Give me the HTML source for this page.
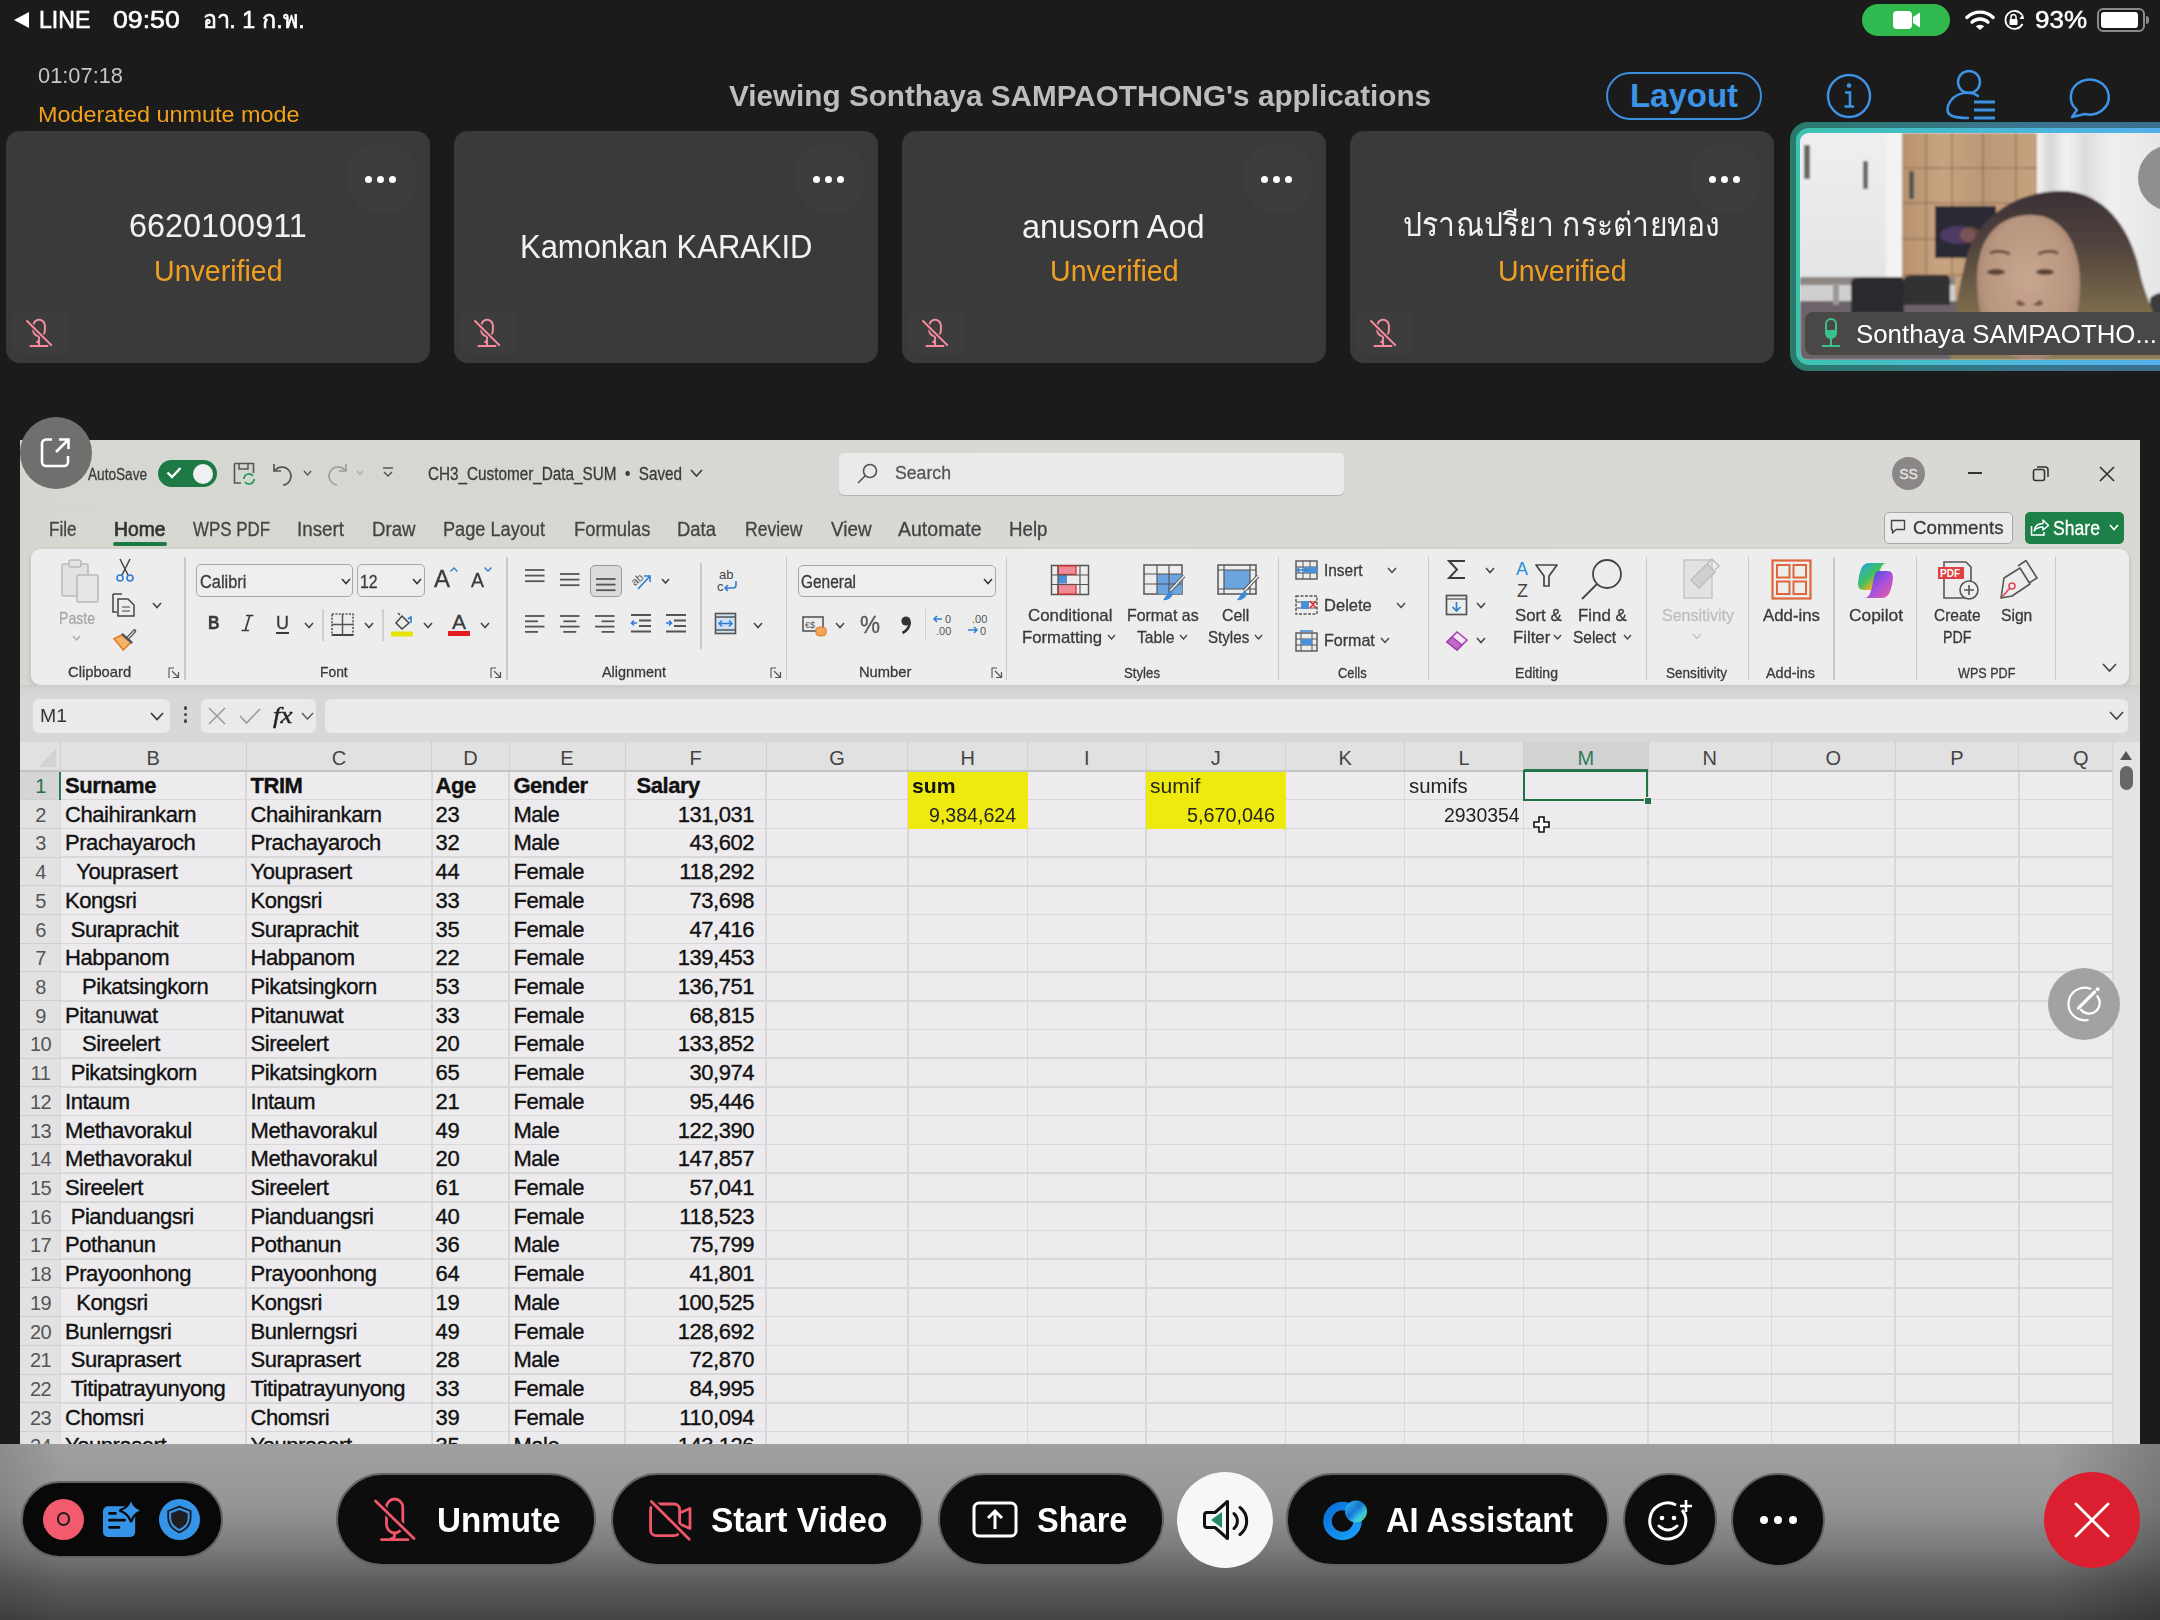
<!DOCTYPE html>
<html><head><meta charset="utf-8">
<style>
html,body{margin:0;padding:0;}
body{width:2160px;height:1620px;overflow:hidden;position:relative;background:#1b1b1b;font-family:"Liberation Sans",sans-serif;}
.abs{position:absolute;}
.t{white-space:nowrap;}
.card{background:#3a3a3a;border-radius:14px;}
.xs .t{-webkit-text-stroke-width:0.3px;}
</style></head><body>


<div class="abs" style="left:14px;top:12px;width:0;height:0;border-top:8px solid transparent;border-bottom:8px solid transparent;border-right:15px solid #fff;"></div>
<div class="abs t" style="left:38.5px;top:-4.4px;font-size:24px;line-height:48px;color:#fff;font-weight:normal;font-style:normal;transform:scaleX(0.9615);transform-origin:0 0;-webkit-text-stroke-width:0.6px;">LINE</div><div class="abs t" style="left:113.3px;top:-4.4px;font-size:24px;line-height:48px;color:#fff;font-weight:normal;font-style:normal;transform:scaleX(1.1106);transform-origin:0 0;-webkit-text-stroke-width:0.6px;">09:50</div><div class="abs t" style="left:202.8px;top:-4px;font-size:24px;line-height:48px;color:#fff;transform:scaleX(0.972);transform-origin:0 0;-webkit-text-stroke-width:0.6px;">อา. 1 ก.พ.</div>
<div class="abs" style="left:1862px;top:4px;width:88px;height:32px;border-radius:16px;background:#30b94f;"></div>
<div class="abs" style="left:1893px;top:11px;width:19px;height:18px;border-radius:4px;background:#fff;"></div>
<svg class="abs" style="left:1912px;top:12px" width="9" height="16"><path d="M1 5 L8 0.5 L8 15.5 L1 11 Z" fill="#fff"/></svg>
<svg class="abs" style="left:1965px;top:9px" width="30" height="22.5" viewBox="0 0 32 24">
 <path d="M2 9 A20 20 0 0 1 30 9" stroke="#fff" stroke-width="3.6" fill="none" stroke-linecap="round"/>
 <path d="M7.5 14 A12.5 12.5 0 0 1 24.5 14" stroke="#fff" stroke-width="3.6" fill="none" stroke-linecap="round"/>
 <path d="M16 22.5 L11.5 18.5 A6.5 6.5 0 0 1 20.5 18.5 Z" fill="#fff"/>
</svg>
<svg class="abs" style="left:2003px;top:9px" width="24" height="22" viewBox="0 0 24 22">
 <path d="M19 6 A9 9 0 1 0 19.5 15" stroke="#fff" stroke-width="1.8" fill="none"/>
 <path d="M16.5 10 L21 10 L20 5 Z" fill="#fff"/>
 <rect x="6.5" y="10" width="8" height="6" rx="1" fill="#fff"/>
 <path d="M8 10 V8 A2.5 2.5 0 0 1 13 8 V10" stroke="#fff" stroke-width="1.5" fill="none"/>
</svg>
<div class="abs t" style="left:2035.0px;top:-3.2px;font-size:23px;line-height:46px;color:#fff;font-weight:normal;font-style:normal;transform:scaleX(1.1296);transform-origin:0 0;-webkit-text-stroke-width:0.5px;">93%</div>
<div class="abs" style="left:2097px;top:8px;width:44px;height:20px;border:2px solid #8a8a8a;border-radius:6px;"></div>
<div class="abs" style="left:2101px;top:12px;width:37px;height:16px;border-radius:3px;background:#fff;"></div>
<div class="abs" style="left:2146px;top:16px;width:3px;height:8px;border-radius:0 3px 3px 0;background:#8a8a8a;"></div>


<div class="abs t" style="left:38.0px;top:54.4px;font-size:22px;line-height:44px;color:#c6c6c6;font-weight:normal;font-style:normal;transform:scaleX(0.9925);transform-origin:0 0;">01:07:18</div><div class="abs t" style="left:38.0px;top:93.2px;font-size:22px;line-height:44px;color:#f2a11d;font-weight:normal;font-style:normal;transform:scaleX(1.0642);transform-origin:0 0;">Moderated unmute mode</div><div class="abs t" style="left:728.9px;top:66.4px;font-size:30px;line-height:60px;color:#bdbdbd;font-weight:bold;font-style:normal;transform:scaleX(0.9896);transform-origin:0 0;">Viewing Sonthaya SAMPAOTHONG's applications</div>
<div class="abs" style="left:1606px;top:72px;width:152px;height:44px;border:2px solid #3b8fdf;border-radius:24px;"></div>
<div class="abs t" style="left:1606px;top:74px;width:156px;text-align:center;font-size:33px;font-weight:bold;color:#3d93e6;line-height:44px;">Layout</div>
<svg class="abs" style="left:1826px;top:73px" width="46" height="46" viewBox="0 0 46 46">
 <circle cx="23" cy="23" r="21" stroke="#3d93e6" stroke-width="2.4" fill="none"/>
 <circle cx="23" cy="12.5" r="2.3" fill="#3d93e6"/>
 <path d="M19 19.5 H24 V33 M18.5 33.5 H28" stroke="#3d93e6" stroke-width="2.6" fill="none"/>
</svg>
<svg class="abs" style="left:1944px;top:68px" width="56" height="54" viewBox="0 0 56 54">
 <circle cx="25" cy="14" r="11" stroke="#3d93e6" stroke-width="2.5" fill="none"/>
 <path d="M34 28 C28 23 10 22 4 38 C1 48 10 50 24 50" stroke="#3d93e6" stroke-width="2.5" fill="none" stroke-linecap="round"/>
 <path d="M30 34 H51 M30 42 H51 M30 50 H51" stroke="#3d93e6" stroke-width="2.8" fill="none"/>
</svg>
<svg class="abs" style="left:2068px;top:74px" width="46" height="46" viewBox="0 0 46 46">
 <path d="M9 36 A19 17.5 0 1 1 17 40 L4 43 Z" stroke="#3d93e6" stroke-width="2.5" fill="none" stroke-linejoin="round"/>
</svg>

<div class="abs card" style="left:6px;top:131px;width:424px;height:232px;"></div>
<div class="abs" style="left:346px;top:142px;width:72px;height:72px;border-radius:36px;background:#3d3d3d;"></div>
<div class="abs" style="left:365.0px;top:175.5px;width:7px;height:7px;border-radius:4px;background:#fff;"></div>
<div class="abs" style="left:377.2px;top:175.5px;width:7px;height:7px;border-radius:4px;background:#fff;"></div>
<div class="abs" style="left:389.4px;top:175.5px;width:7px;height:7px;border-radius:4px;background:#fff;"></div>
<div class="abs" style="left:13px;top:311px;width:56px;height:43px;border-radius:8px;background:#3d3d3d;"></div>
<svg class="abs" style="left:25px;top:317px" width="36" height="34" viewBox="0 0 36 34">
 <rect x="8.3" y="2.8" width="11.6" height="16.4" rx="5.8" stroke="#f48c9c" stroke-width="2" fill="none"/>
 <path d="M14.1 19.2 V22 C14.1 24 12.5 25 11.5 25.5 M14.1 23.5 V28.5" stroke="#f48c9c" stroke-width="2" fill="none"/>
 <path d="M5.5 29 H22.5" stroke="#f48c9c" stroke-width="2.2" stroke-linecap="round"/>
 <path d="M2 4 L26.2 28" stroke="#3a3a3a" stroke-width="4.5"/>
 <path d="M2 4 L26.2 28" stroke="#f48c9c" stroke-width="2" stroke-linecap="round"/>
</svg>
<div class="abs t" style="left:128.8px;top:192.6px;font-size:33px;line-height:66px;color:#f2f2f2;font-weight:normal;font-style:normal;transform:scaleX(0.9818);transform-origin:0 0;">6620100911</div>
<div class="abs t" style="left:153.7px;top:241.0px;font-size:30px;line-height:60px;color:#f0a020;font-weight:normal;font-style:normal;transform:scaleX(0.9521);transform-origin:0 0;">Unverified</div>
<div class="abs card" style="left:454px;top:131px;width:424px;height:232px;"></div>
<div class="abs" style="left:794px;top:142px;width:72px;height:72px;border-radius:36px;background:#3d3d3d;"></div>
<div class="abs" style="left:813.0px;top:175.5px;width:7px;height:7px;border-radius:4px;background:#fff;"></div>
<div class="abs" style="left:825.2px;top:175.5px;width:7px;height:7px;border-radius:4px;background:#fff;"></div>
<div class="abs" style="left:837.4px;top:175.5px;width:7px;height:7px;border-radius:4px;background:#fff;"></div>
<div class="abs" style="left:461px;top:311px;width:56px;height:43px;border-radius:8px;background:#3d3d3d;"></div>
<svg class="abs" style="left:473px;top:317px" width="36" height="34" viewBox="0 0 36 34">
 <rect x="8.3" y="2.8" width="11.6" height="16.4" rx="5.8" stroke="#f48c9c" stroke-width="2" fill="none"/>
 <path d="M14.1 19.2 V22 C14.1 24 12.5 25 11.5 25.5 M14.1 23.5 V28.5" stroke="#f48c9c" stroke-width="2" fill="none"/>
 <path d="M5.5 29 H22.5" stroke="#f48c9c" stroke-width="2.2" stroke-linecap="round"/>
 <path d="M2 4 L26.2 28" stroke="#3a3a3a" stroke-width="4.5"/>
 <path d="M2 4 L26.2 28" stroke="#f48c9c" stroke-width="2" stroke-linecap="round"/>
</svg>
<div class="abs t" style="left:520.0px;top:214.0px;font-size:33px;line-height:66px;color:#f2f2f2;font-weight:normal;font-style:normal;transform:scaleX(0.9380);transform-origin:0 0;">Kamonkan KARAKID</div>
<div class="abs card" style="left:902px;top:131px;width:424px;height:232px;"></div>
<div class="abs" style="left:1242px;top:142px;width:72px;height:72px;border-radius:36px;background:#3d3d3d;"></div>
<div class="abs" style="left:1261.0px;top:175.5px;width:7px;height:7px;border-radius:4px;background:#fff;"></div>
<div class="abs" style="left:1273.2px;top:175.5px;width:7px;height:7px;border-radius:4px;background:#fff;"></div>
<div class="abs" style="left:1285.4px;top:175.5px;width:7px;height:7px;border-radius:4px;background:#fff;"></div>
<div class="abs" style="left:909px;top:311px;width:56px;height:43px;border-radius:8px;background:#3d3d3d;"></div>
<svg class="abs" style="left:921px;top:317px" width="36" height="34" viewBox="0 0 36 34">
 <rect x="8.3" y="2.8" width="11.6" height="16.4" rx="5.8" stroke="#f48c9c" stroke-width="2" fill="none"/>
 <path d="M14.1 19.2 V22 C14.1 24 12.5 25 11.5 25.5 M14.1 23.5 V28.5" stroke="#f48c9c" stroke-width="2" fill="none"/>
 <path d="M5.5 29 H22.5" stroke="#f48c9c" stroke-width="2.2" stroke-linecap="round"/>
 <path d="M2 4 L26.2 28" stroke="#3a3a3a" stroke-width="4.5"/>
 <path d="M2 4 L26.2 28" stroke="#f48c9c" stroke-width="2" stroke-linecap="round"/>
</svg>
<div class="abs t" style="left:1022.0px;top:193.5px;font-size:33px;line-height:66px;color:#f2f2f2;font-weight:normal;font-style:normal;transform:scaleX(0.9858);transform-origin:0 0;">anusorn Aod</div>
<div class="abs t" style="left:1049.7px;top:241.0px;font-size:30px;line-height:60px;color:#f0a020;font-weight:normal;font-style:normal;transform:scaleX(0.9521);transform-origin:0 0;">Unverified</div>
<div class="abs card" style="left:1350px;top:131px;width:424px;height:232px;"></div>
<div class="abs" style="left:1690px;top:142px;width:72px;height:72px;border-radius:36px;background:#3d3d3d;"></div>
<div class="abs" style="left:1709.0px;top:175.5px;width:7px;height:7px;border-radius:4px;background:#fff;"></div>
<div class="abs" style="left:1721.2px;top:175.5px;width:7px;height:7px;border-radius:4px;background:#fff;"></div>
<div class="abs" style="left:1733.4px;top:175.5px;width:7px;height:7px;border-radius:4px;background:#fff;"></div>
<div class="abs" style="left:1357px;top:311px;width:56px;height:43px;border-radius:8px;background:#3d3d3d;"></div>
<svg class="abs" style="left:1369px;top:317px" width="36" height="34" viewBox="0 0 36 34">
 <rect x="8.3" y="2.8" width="11.6" height="16.4" rx="5.8" stroke="#f48c9c" stroke-width="2" fill="none"/>
 <path d="M14.1 19.2 V22 C14.1 24 12.5 25 11.5 25.5 M14.1 23.5 V28.5" stroke="#f48c9c" stroke-width="2" fill="none"/>
 <path d="M5.5 29 H22.5" stroke="#f48c9c" stroke-width="2.2" stroke-linecap="round"/>
 <path d="M2 4 L26.2 28" stroke="#3a3a3a" stroke-width="4.5"/>
 <path d="M2 4 L26.2 28" stroke="#f48c9c" stroke-width="2" stroke-linecap="round"/>
</svg>
<div class="abs t" style="left:1403px;top:192px;font-size:33px;line-height:66px;color:#f2f2f2;transform:scaleX(0.91);transform-origin:0 0;">ปราณปรียา กระต่ายทอง</div>
<div class="abs t" style="left:1497.7px;top:241.0px;font-size:30px;line-height:60px;color:#f0a020;font-weight:normal;font-style:normal;transform:scaleX(0.9521);transform-origin:0 0;">Unverified</div>

<div class="abs" style="left:1790px;top:122px;width:400px;height:249px;border-radius:18px;background:linear-gradient(90deg,#2a7a6c,#3a7590 60%,#3a6f90);"></div>
<div class="abs" style="left:1796px;top:128px;width:400px;height:237px;border-radius:13px;background:linear-gradient(90deg,#3cc4b0,#4ab8d8 50%,#55aef0);"></div>
<div class="abs" style="left:1800px;top:133px;width:400px;height:227px;border-radius:9px 0 0 9px;overflow:hidden;background:#e9e9eb;">
<svg class="abs" style="left:0;top:0" width="400" height="227" viewBox="0 0 400 227">
 <defs>
  <filter id="vb" x="-5%" y="-5%" width="110%" height="110%"><feGaussianBlur stdDeviation="1.3"/></filter>
  <linearGradient id="win" x1="0" y1="0" x2="0" y2="1"><stop offset="0" stop-color="#efeff1"/><stop offset="0.6" stop-color="#e4e5e7"/><stop offset="1" stop-color="#d4d5d7"/></linearGradient>
  <linearGradient id="wood" x1="0" y1="0" x2="1" y2="0"><stop offset="0" stop-color="#b8926e"/><stop offset="0.3" stop-color="#c9a480"/><stop offset="0.6" stop-color="#bd9876"/><stop offset="1" stop-color="#c6a27e"/></linearGradient>
  <linearGradient id="cur" x1="0" y1="0" x2="1" y2="0"><stop offset="0" stop-color="#f4f4f4"/><stop offset="0.08" stop-color="#d6d6d6"/><stop offset="0.18" stop-color="#f2f2f2"/><stop offset="0.3" stop-color="#dcdcdc"/><stop offset="0.45" stop-color="#efefef"/><stop offset="0.75" stop-color="#e6e6e6"/><stop offset="0.88" stop-color="#f2f2f2"/><stop offset="1" stop-color="#d8d8d8"/></linearGradient>
  <linearGradient id="hair" x1="0" y1="0" x2="0" y2="1"><stop offset="0" stop-color="#3a3036"/><stop offset="0.35" stop-color="#54463e"/><stop offset="0.7" stop-color="#7a6a4a"/><stop offset="1" stop-color="#8c7c56"/></linearGradient>
  <radialGradient id="skin" cx="0.5" cy="0.45" r="0.6"><stop offset="0" stop-color="#c8a690"/><stop offset="0.7" stop-color="#b89680"/><stop offset="1" stop-color="#9c7c68"/></radialGradient>
 </defs>
 <g filter="url(#vb)">
  <rect x="0" y="0" width="102" height="227" fill="url(#win)"/>
  <rect x="86" y="0" width="16" height="227" fill="#f3f3f3"/>
  <rect x="102" y="0" width="136" height="190" fill="url(#wood)"/>
  <path d="M102 35 H238 M102 70 H238 M102 106 H238 M102 142 H238 M126 0 V190 M152 0 V190 M183 0 V190 M216 0 V190" stroke="#7a5e48" stroke-width="1.6" opacity="0.55"/>
  <rect x="237" y="0" width="163" height="227" fill="url(#cur)"/>
  <rect x="135" y="73" width="61" height="52" fill="#2a2a34"/>
  <ellipse cx="158" cy="102" rx="18" ry="9" fill="#7a50a0" opacity="0.45"/>
  <ellipse cx="170" cy="102" rx="10" ry="8" fill="#b07040" opacity="0.45"/>
  <rect x="4" y="12" width="6" height="34" fill="#666"/>
  <rect x="63" y="28" width="5" height="28" fill="#666"/>
  <rect x="109" y="38" width="5" height="28" fill="#555"/>
  <rect x="0" y="144" width="155" height="8" fill="#8c8682"/>
  <rect x="0" y="152" width="155" height="20" fill="#cfcfd0"/>
  <rect x="0" y="168" width="160" height="59" fill="#6c646a"/>
  <rect x="33" y="150" width="6" height="22" fill="#9a9694"/>
  <path d="M51 150 Q51 144 60 144 H100 Q104 144 104 150 V180 H51 Z" fill="#2c2c2e"/>
  <path d="M104 148 Q104 142 112 142 H146 Q150 142 150 148 V172 H104 Z" fill="#303032"/>
  <rect x="311" y="159" width="24" height="6" fill="#8a8480"/>
  <path d="M350 165 Q358 158 372 160 V227 H350 Z" fill="#3a3a3c"/>
  <path d="M262 58 C300 58 330 90 340 140 C345 165 360 190 370 227 H150 C152 190 158 160 165 130 C175 85 215 58 262 58 Z" fill="url(#hair)"/>
  <path d="M228 82 C262 80 280 110 280 150 C280 200 262 227 230 227 C198 227 178 200 177 150 C176 112 192 84 228 82 Z" fill="url(#skin)"/>
  <path d="M190 120 Q200 116 210 121 M238 121 Q248 116 258 120" stroke="#6a5040" stroke-width="3" fill="none"/>
  <ellipse cx="196" cy="139" rx="9" ry="3" fill="#5a4438"/>
  <ellipse cx="245" cy="139" rx="9" ry="3" fill="#5a4438"/>
  <ellipse cx="221" cy="170" rx="5" ry="3" fill="#7a5a4a"/><ellipse cx="238" cy="170" rx="5" ry="3" fill="#7a5a4a"/><ellipse cx="229.5" cy="165" rx="10" ry="6" fill="#c4a08c"/>
 </g>
</svg>
</div>
<div class="abs" style="left:1805px;top:312px;width:360px;height:42.5px;border-radius:8px 0 0 8px;background:#4a4846;"></div>
<svg class="abs" style="left:1820px;top:318px" width="22" height="30" viewBox="0 0 22 30">
 <rect x="6" y="1" width="10" height="19" rx="5" stroke="#3cc08e" stroke-width="2" fill="none"/>
 <path d="M6 12 H16 V15 A5 5 0 0 1 6 15 Z" fill="#3cc08e"/>
 <path d="M11 20 V27 M2 28 H20" stroke="#3cc08e" stroke-width="2"/>
</svg>
<div class="abs t" style="left:1856.0px;top:307.5px;font-size:26px;line-height:52px;color:#fff;font-weight:normal;font-style:normal;transform:scaleX(0.9935);transform-origin:0 0;">Sonthaya SAMPAOTHO...</div>
<div class="abs" style="left:2138px;top:145px;width:66px;height:66px;border-radius:33px;background:#8f8f8f;"></div>

<div class="xs">
<div class="abs" style="left:20.0px;top:440.0px;width:2120.0px;height:1004.0px;background:linear-gradient(90deg,#d4d8d1 0%,#d7d9d4 50%,#d9d8d4 100%);"></div>
<div class="abs t" style="left:88.0px;top:458.5px;font-size:16px;line-height:32px;color:#3c3c3c;font-weight:normal;font-style:normal;transform:scaleX(0.8503);transform-origin:0 0;">AutoSave</div>
<div class="abs" style="left:157.5px;top:459.5px;width:59.5px;height:27.5px;background:#1e7a45;border-radius:14px;"></div>
<svg class="abs" style="left:166.0px;top:466.0px" width="16" height="13" viewBox="0 0 16 13"><path d="M1.5 6.5 L6 11 L14.5 2" stroke="#fff" stroke-width="2.4" fill="none"/></svg>
<div class="abs" style="left:193.0px;top:463.5px;width:20.0px;height:20.0px;background:#f0f0f0;border-radius:10px;"></div>
<svg class="abs" style="left:233.0px;top:462.0px" width="24" height="24" viewBox="0 0 24 24"><path d="M1.5 1.5 H20.5 V11 M1.5 1.5 V21 H8" stroke="#555" stroke-width="1.6" fill="none"/><path d="M6 1.5 V7 H15 V1.5" stroke="#555" stroke-width="1.5" fill="none"/><path d="M11 17 A5 5 0 0 1 20 14 M21 17 A5 5 0 0 1 12 20" stroke="#2a9a50" stroke-width="1.8" fill="none"/></svg>
<svg class="abs" style="left:271.0px;top:461.0px" width="24" height="26" viewBox="0 0 24 26"><path d="M3 3 V10 H10" stroke="#555" stroke-width="1.7" fill="none"/><path d="M3.5 10 A9 9 0 1 1 12 24" stroke="#555" stroke-width="1.7" fill="none"/></svg>
<svg class="abs" style="left:301.5px;top:469.0px" width="11" height="8" viewBox="0 0 11 8"><path d="M2 2 L5.5 6 L9 2" stroke="#555" stroke-width="1.4" fill="none"/></svg>
<svg class="abs" style="left:325.0px;top:461.0px" width="24" height="26" viewBox="0 0 24 26"><path d="M21 3 V10 H14" stroke="#9a9a9a" stroke-width="1.6" fill="none"/><path d="M20.5 10 A9 9 0 1 0 12 24" stroke="#9a9a9a" stroke-width="1.6" fill="none"/></svg>
<svg class="abs" style="left:355.0px;top:469.2px" width="10" height="7.5" viewBox="0 0 10 7.5"><path d="M2 2 L5.0 5.5 L8 2" stroke="#aaa" stroke-width="1.2" fill="none"/></svg>
<svg class="abs" style="left:381.0px;top:466.0px" width="14" height="14" viewBox="0 0 14 14"><path d="M2 2 H12" stroke="#555" stroke-width="1.5"/><path d="M3 6 L7 10 L11 6" stroke="#555" stroke-width="1.5" fill="none"/></svg>
<div class="abs t" style="left:428.0px;top:456.0px;font-size:18px;line-height:36px;color:#3a3a3a;font-weight:normal;font-style:normal;transform:scaleX(0.8483);transform-origin:0 0;">CH3_Customer_Data_SUM&nbsp;&nbsp;•&nbsp;&nbsp;Saved</div>
<svg class="abs" style="left:688.5px;top:468.0px" width="15" height="10" viewBox="0 0 15 10"><path d="M2 2 L7.5 8 L13 2" stroke="#3a3a3a" stroke-width="1.6" fill="none"/></svg>
<div class="abs" style="left:839.0px;top:453.0px;width:505.0px;height:41.5px;background:#ebeaea;border-radius:5px;box-shadow:0 1px 1px rgba(0,0,0,0.18);"></div>
<svg class="abs" style="left:855.0px;top:461.0px" width="24" height="26" viewBox="0 0 24 26"><circle cx="15" cy="10" r="6.5" stroke="#555" stroke-width="1.6" fill="none"/><path d="M10.5 14.5 L3 22" stroke="#555" stroke-width="1.6"/></svg>
<div class="abs t" style="left:895.0px;top:453.5px;font-size:19px;line-height:38px;color:#555;font-weight:normal;font-style:normal;transform:scaleX(0.9302);transform-origin:0 0;">Search</div>
<div class="abs" style="left:1892.0px;top:457.0px;width:33.0px;height:33.0px;background:#8a8786;border-radius:17px;"></div>
<div class="abs t" style="left:908.5px;width:2000px;text-align:center;top:460.0px;font-size:14px;line-height:28px;color:#e8e8e8;font-weight:normal;font-style:normal;">SS</div>
<div class="abs" style="left:1968.0px;top:472.0px;width:14.0px;height:1.8px;background:#333;"></div>
<svg class="abs" style="left:2032.0px;top:465.0px" width="18" height="18" viewBox="0 0 18 18"><rect x="1.5" y="4.5" width="11" height="11" rx="2" stroke="#333" stroke-width="1.6" fill="none"/><path d="M5 2 H13 A3 3 0 0 1 16 5 V12" stroke="#333" stroke-width="1.5" fill="none"/></svg>
<svg class="abs" style="left:2098.0px;top:465.0px" width="18" height="18" viewBox="0 0 18 18"><path d="M2 2 L16 16 M16 2 L2 16" stroke="#333" stroke-width="1.7"/></svg>
<div class="abs t" style="left:49.0px;top:508.5px;font-size:20px;line-height:40px;color:#444;font-weight:normal;font-style:normal;transform:scaleX(0.8533);transform-origin:0 0;">File</div>
<div class="abs t" style="left:113.5px;top:508.5px;font-size:20px;line-height:40px;color:#333;font-weight:normal;font-style:normal;transform:scaleX(0.9653);transform-origin:0 0;-webkit-text-stroke-width:0.7px;">Home</div>
<div class="abs t" style="left:193.0px;top:508.5px;font-size:20px;line-height:40px;color:#444;font-weight:normal;font-style:normal;transform:scaleX(0.8451);transform-origin:0 0;">WPS PDF</div>
<div class="abs t" style="left:296.5px;top:508.5px;font-size:20px;line-height:40px;color:#444;font-weight:normal;font-style:normal;transform:scaleX(0.9396);transform-origin:0 0;">Insert</div>
<div class="abs t" style="left:371.5px;top:508.5px;font-size:20px;line-height:40px;color:#444;font-weight:normal;font-style:normal;transform:scaleX(0.9320);transform-origin:0 0;">Draw</div>
<div class="abs t" style="left:442.5px;top:508.5px;font-size:20px;line-height:40px;color:#444;font-weight:normal;font-style:normal;transform:scaleX(0.9081);transform-origin:0 0;">Page Layout</div>
<div class="abs t" style="left:573.5px;top:508.5px;font-size:20px;line-height:40px;color:#444;font-weight:normal;font-style:normal;transform:scaleX(0.9178);transform-origin:0 0;">Formulas</div>
<div class="abs t" style="left:676.5px;top:508.5px;font-size:20px;line-height:40px;color:#444;font-weight:normal;font-style:normal;transform:scaleX(0.9231);transform-origin:0 0;">Data</div>
<div class="abs t" style="left:745.0px;top:508.5px;font-size:20px;line-height:40px;color:#444;font-weight:normal;font-style:normal;transform:scaleX(0.8768);transform-origin:0 0;">Review</div>
<div class="abs t" style="left:830.5px;top:508.5px;font-size:20px;line-height:40px;color:#444;font-weight:normal;font-style:normal;transform:scaleX(0.9421);transform-origin:0 0;">View</div>
<div class="abs t" style="left:897.5px;top:508.5px;font-size:20px;line-height:40px;color:#444;font-weight:normal;font-style:normal;transform:scaleX(0.9754);transform-origin:0 0;">Automate</div>
<div class="abs t" style="left:1008.5px;top:508.5px;font-size:20px;line-height:40px;color:#444;font-weight:normal;font-style:normal;transform:scaleX(0.9360);transform-origin:0 0;">Help</div>
<div class="abs" style="left:113.0px;top:542.0px;width:54.0px;height:3.5px;background:#1e7a45;border-radius:2px;"></div>
<div class="abs" style="left:1884.0px;top:512.0px;width:129.0px;height:32.0px;background:#ecebeb;border:1.3px solid #a9a9a9;border-radius:5px;box-sizing:border-box;"></div>
<svg class="abs" style="left:1890.0px;top:519.0px" width="18" height="17" viewBox="0 0 18 17"><path d="M1.5 1.5 H14.5 V10.5 H6 L2.5 14 V10.5 H1.5 Z" stroke="#444" stroke-width="1.4" fill="none" stroke-linejoin="round"/></svg>
<div class="abs t" style="left:1912.5px;top:508.5px;font-size:19px;line-height:38px;color:#3a3a3a;font-weight:normal;font-style:normal;transform:scaleX(0.9852);transform-origin:0 0;">Comments</div>
<div class="abs" style="left:2024.5px;top:511.5px;width:99.5px;height:32.5px;background:#1e8049;border-radius:5px;"></div>
<svg class="abs" style="left:2030.0px;top:517.0px" width="20" height="20" viewBox="0 0 20 20"><path d="M1.5 9 V18 H14 V15" stroke="#fff" stroke-width="1.5" fill="none"/><path d="M4 14 C5 8 9 6.5 13 6.5 V3 L18.5 8.5 L13 13 V10 C9 10 6 11.5 4 14 Z" stroke="#fff" stroke-width="1.4" fill="none" stroke-linejoin="round"/></svg>
<div class="abs t" style="left:2053.0px;top:507.5px;font-size:20px;line-height:40px;color:#fff;font-weight:normal;font-style:normal;transform:scaleX(0.8806);transform-origin:0 0;">Share</div>
<svg class="abs" style="left:2108.0px;top:523.2px" width="12" height="8.5" viewBox="0 0 12 8.5"><path d="M2 2 L6.0 6.5 L10 2" stroke="#fff" stroke-width="1.5" fill="none"/></svg>
<div class="abs" style="left:31.0px;top:549.0px;width:2098.0px;height:136.0px;background:#eeedee;border-radius:9px;box-shadow:0 2px 5px rgba(0,0,0,0.16);"></div>
<div class="abs" style="left:184.4px;top:557.0px;width:1.2px;height:123.0px;background:#c9c9c9;"></div>
<div class="abs" style="left:506.4px;top:557.0px;width:1.2px;height:123.0px;background:#c9c9c9;"></div>
<div class="abs" style="left:785.9px;top:557.0px;width:1.2px;height:123.0px;background:#c9c9c9;"></div>
<div class="abs" style="left:1006.1px;top:557.0px;width:1.2px;height:123.0px;background:#c9c9c9;"></div>
<div class="abs" style="left:1278.1px;top:557.0px;width:1.2px;height:123.0px;background:#c9c9c9;"></div>
<div class="abs" style="left:1428.2px;top:557.0px;width:1.2px;height:123.0px;background:#c9c9c9;"></div>
<div class="abs" style="left:1645.8px;top:557.0px;width:1.2px;height:123.0px;background:#c9c9c9;"></div>
<div class="abs" style="left:1747.7px;top:557.0px;width:1.2px;height:123.0px;background:#c9c9c9;"></div>
<div class="abs" style="left:1833.4px;top:557.0px;width:1.2px;height:123.0px;background:#c9c9c9;"></div>
<div class="abs" style="left:1916.3px;top:557.0px;width:1.2px;height:123.0px;background:#c9c9c9;"></div>
<div class="abs" style="left:2055.1px;top:557.0px;width:1.2px;height:123.0px;background:#c9c9c9;"></div>
<div class="abs" style="left:700.4px;top:563.0px;width:1.2px;height:85.5px;background:#c9c9c9;"></div>
<svg class="abs" style="left:58.0px;top:558.0px" width="44" height="46" viewBox="0 0 44 46"><rect x="4" y="6" width="26" height="32" rx="2" fill="#e2e2e2" stroke="#b9b9b9" stroke-width="1.6"/><rect x="11" y="2" width="12" height="7" rx="2" fill="#e2e2e2" stroke="#b9b9b9" stroke-width="1.5"/><rect x="19" y="17" width="21" height="27" rx="1.5" fill="#e6e6e6" stroke="#b9b9b9" stroke-width="1.6"/></svg>
<div class="abs t" style="left:59.0px;top:601.7px;font-size:17px;line-height:34px;color:#a7a7a7;font-weight:normal;font-style:normal;transform:scaleX(0.8281);transform-origin:0 0;">Paste</div>
<svg class="abs" style="left:70.5px;top:634.0px" width="11" height="8" viewBox="0 0 11 8"><path d="M2 2 L5.5 6 L9 2" stroke="#aaa" stroke-width="1.3" fill="none"/></svg>
<svg class="abs" style="left:115.0px;top:558.0px" width="20" height="26" viewBox="0 0 20 26"><path d="M5 1 L13 17 M15 1 L7 17" stroke="#444" stroke-width="1.5"/><circle cx="5" cy="20" r="3" stroke="#2e7fd0" stroke-width="1.6" fill="none"/><circle cx="15" cy="20" r="3" stroke="#2e7fd0" stroke-width="1.6" fill="none"/></svg>
<svg class="abs" style="left:111.0px;top:592.0px" width="27" height="27" viewBox="0 0 27 27"><path d="M2 2 H11 M2 2 V20 H6" stroke="#444" stroke-width="1.5" fill="none"/><path d="M7 7 H17 L23 13 V24 H7 Z" stroke="#444" stroke-width="1.5" fill="none"/><path d="M11 15 H19 M11 19 H19" stroke="#444" stroke-width="1.2"/></svg>
<svg class="abs" style="left:151.0px;top:600.8px" width="12" height="8.5" viewBox="0 0 12 8.5"><path d="M2 2 L6.0 6.5 L10 2" stroke="#444" stroke-width="1.6" fill="none"/></svg>
<svg class="abs" style="left:111.0px;top:627.0px" width="28" height="26" viewBox="0 0 28 26"><path d="M3 11.7 L11.3 7.7 L20.3 15 L12.3 23 Z" fill="#f3b46a" stroke="#e07a20" stroke-width="1.5" stroke-linejoin="round"/><path d="M11.5 7.5 L20.5 15.5" stroke="#555" stroke-width="2.4" stroke-linecap="round"/><path d="M17 11 L23.5 4" stroke="#555" stroke-width="3.6" stroke-linecap="round"/><path d="M17.5 10.5 L23 4.5" stroke="#d8d8d8" stroke-width="1.2" stroke-linecap="round"/></svg>
<div class="abs t" style="left:67.5px;top:657.0px;font-size:15px;line-height:30px;color:#3a3a3a;font-weight:normal;font-style:normal;transform:scaleX(0.9828);transform-origin:0 0;">Clipboard</div>
<svg class="abs" style="left:168.0px;top:667.0px" width="12" height="12" viewBox="0 0 12 12"><path d="M1 11 V1 H6" stroke="#555" stroke-width="1.1" fill="none"/><path d="M4 4 L10.5 10.5 M5 10.5 H10.5 V5" stroke="#555" stroke-width="1.2" fill="none"/></svg>
<div class="abs" style="left:196.4px;top:564.3px;width:157.0px;height:32.4px;background:#efeeef;border:1.3px solid #a8a8a8;border-radius:5px;box-sizing:border-box;"></div>
<div class="abs t" style="left:200.0px;top:563.7px;font-size:18px;line-height:36px;color:#3a3a3a;font-weight:normal;font-style:normal;transform:scaleX(0.9095);transform-origin:0 0;">Calibri</div>
<svg class="abs" style="left:339.5px;top:576.8px" width="12" height="8.5" viewBox="0 0 12 8.5"><path d="M2 2 L6.0 6.5 L10 2" stroke="#333" stroke-width="1.5" fill="none"/></svg>
<div class="abs" style="left:356.8px;top:564.3px;width:68.2px;height:32.4px;background:#efeeef;border:1.3px solid #a8a8a8;border-radius:5px;box-sizing:border-box;"></div>
<div class="abs t" style="left:360.0px;top:563.7px;font-size:18px;line-height:36px;color:#3a3a3a;font-weight:normal;font-style:normal;transform:scaleX(0.8790);transform-origin:0 0;">12</div>
<svg class="abs" style="left:411.3px;top:576.8px" width="12" height="8.5" viewBox="0 0 12 8.5"><path d="M2 2 L6.0 6.5 L10 2" stroke="#333" stroke-width="1.5" fill="none"/></svg>
<div class="abs t" style="left:434.0px;top:554.5px;font-size:24px;line-height:48px;color:#3a3a3a;font-weight:normal;font-style:normal;transform:scaleX(0.9995);transform-origin:0 0;">A</div>
<svg class="abs" style="left:449.0px;top:566.0px" width="10" height="7" viewBox="0 0 10 7"><path d="M1.5 5.5 L5 2 L8.5 5.5" stroke="#2e7fd0" stroke-width="1.4" fill="none"/></svg>
<div class="abs t" style="left:471.0px;top:560.0px;font-size:20px;line-height:40px;color:#3a3a3a;font-weight:normal;font-style:normal;transform:scaleX(0.9745);transform-origin:0 0;">A</div>
<svg class="abs" style="left:483.0px;top:566.0px" width="10" height="7" viewBox="0 0 10 7"><path d="M1.5 1.5 L5 5 L8.5 1.5" stroke="#2e7fd0" stroke-width="1.4" fill="none"/></svg>
<div class="abs t" style="left:207.5px;top:604.0px;font-size:19px;line-height:38px;color:#3a3a3a;font-weight:bold;font-style:normal;transform:scaleX(0.8381);transform-origin:0 0;">B</div>
<svg class="abs" style="left:240.0px;top:614.0px" width="15" height="18" viewBox="0 0 15 18"><path d="M6 1.5 H13.5 M1.5 16.5 H9 M9.8 1.5 L5.2 16.5" stroke="#3a3a3a" stroke-width="1.7" fill="none"/></svg>
<div class="abs t" style="left:276.0px;top:604.0px;font-size:19px;line-height:38px;color:#3a3a3a;font-weight:normal;font-style:normal;transform:scaleX(0.9474);transform-origin:0 0;">U</div>
<div class="abs" style="left:276.0px;top:632.0px;width:13.0px;height:1.6px;background:#3a3a3a;"></div>
<svg class="abs" style="left:303.0px;top:620.8px" width="12" height="8.5" viewBox="0 0 12 8.5"><path d="M2 2 L6.0 6.5 L10 2" stroke="#444" stroke-width="1.5" fill="none"/></svg>
<div class="abs" style="left:322.4px;top:609.0px;width:1.2px;height:32.0px;background:#cfcfcf;"></div>
<svg class="abs" style="left:330.0px;top:612.0px" width="25" height="25" viewBox="0 0 25 25"><rect x="2" y="2" width="21" height="21" stroke="#555" stroke-width="1.6" fill="none" stroke-dasharray="2 1.4"/><path d="M12.5 2 V23 M2 12.5 H23" stroke="#555" stroke-width="1.5"/><path d="M2 23 H23" stroke="#444" stroke-width="2"/></svg>
<svg class="abs" style="left:363.0px;top:620.8px" width="12" height="8.5" viewBox="0 0 12 8.5"><path d="M2 2 L6.0 6.5 L10 2" stroke="#444" stroke-width="1.5" fill="none"/></svg>
<div class="abs" style="left:382.4px;top:609.0px;width:1.2px;height:32.0px;background:#cfcfcf;"></div>
<svg class="abs" style="left:390.0px;top:612.0px" width="26" height="26" viewBox="0 0 26 26"><path d="M6 11 L12 4 L19 11 L12 17 Z" stroke="#444" stroke-width="1.5" fill="none"/><path d="M10 3 L8 1" stroke="#444" stroke-width="1.3"/><path d="M18 7 L21 5 L21 11" stroke="#2e7fd0" stroke-width="1.6" fill="none"/><rect x="1" y="19.5" width="22" height="5" fill="#e7e400"/></svg>
<svg class="abs" style="left:422.0px;top:620.8px" width="12" height="8.5" viewBox="0 0 12 8.5"><path d="M2 2 L6.0 6.5 L10 2" stroke="#444" stroke-width="1.5" fill="none"/></svg>
<div class="abs t" style="left:-541.0px;width:2000px;text-align:center;top:600.5px;font-size:21px;line-height:42px;color:#3a3a3a;font-weight:normal;font-style:normal;">A</div>
<div class="abs" style="left:447.5px;top:631.4px;width:22.5px;height:4.5px;background:#e41e1e;"></div>
<svg class="abs" style="left:478.5px;top:620.8px" width="12" height="8.5" viewBox="0 0 12 8.5"><path d="M2 2 L6.0 6.5 L10 2" stroke="#444" stroke-width="1.5" fill="none"/></svg>
<div class="abs t" style="left:319.8px;top:657.0px;font-size:15px;line-height:30px;color:#3a3a3a;font-weight:normal;font-style:normal;transform:scaleX(0.9229);transform-origin:0 0;">Font</div>
<svg class="abs" style="left:490.0px;top:667.0px" width="12" height="12" viewBox="0 0 12 12"><path d="M1 11 V1 H6" stroke="#555" stroke-width="1.1" fill="none"/><path d="M4 4 L10.5 10.5 M5 10.5 H10.5 V5" stroke="#555" stroke-width="1.2" fill="none"/></svg>
<svg class="abs" style="left:525.0px;top:569.0px" width="24" height="19.799999999999997" viewBox="0 0 24 19.799999999999997"><path d="M0 1.0 H19.5" stroke="#555" stroke-width="1.8"/><path d="M0 6.6 H19.5" stroke="#555" stroke-width="1.8"/><path d="M0 12.2 H19.5" stroke="#555" stroke-width="1.8"/></svg>
<svg class="abs" style="left:560.0px;top:573.0px" width="24" height="19.799999999999997" viewBox="0 0 24 19.799999999999997"><path d="M0 1.0 H19.5" stroke="#555" stroke-width="1.8"/><path d="M0 6.6 H19.5" stroke="#555" stroke-width="1.8"/><path d="M0 12.2 H19.5" stroke="#555" stroke-width="1.8"/></svg>
<div class="abs" style="left:589.5px;top:564.7px;width:32.5px;height:32.1px;background:#dcdbdc;border:1.3px solid #9a9a9a;border-radius:5px;box-sizing:border-box;"></div>
<svg class="abs" style="left:596.0px;top:578.0px" width="24" height="19.799999999999997" viewBox="0 0 24 19.799999999999997"><path d="M0 1.0 H19.5" stroke="#555" stroke-width="1.8"/><path d="M0 6.6 H19.5" stroke="#555" stroke-width="1.8"/><path d="M0 12.2 H19.5" stroke="#555" stroke-width="1.8"/></svg>
<svg class="abs" style="left:629.0px;top:568.0px" width="24" height="24" viewBox="0 0 24 24"><text x="1" y="15" font-family="Liberation Sans" font-size="11" fill="#555" transform="rotate(-40 8 10)">ab</text><path d="M9 21 L21 8 M15 8 H21 V14" stroke="#2e7fd0" stroke-width="1.6" fill="none"/></svg>
<svg class="abs" style="left:659.5px;top:577.0px" width="11" height="8" viewBox="0 0 11 8"><path d="M2 2 L5.5 6 L9 2" stroke="#444" stroke-width="1.5" fill="none"/></svg>
<svg class="abs" style="left:525.0px;top:614.5px" width="24" height="24.2" viewBox="0 0 24 24.2"><path d="M0 1.0 H19.5" stroke="#555" stroke-width="1.8"/><path d="M0 6.3 H13" stroke="#555" stroke-width="1.8"/><path d="M0 11.6 H19.5" stroke="#555" stroke-width="1.8"/><path d="M0 16.9 H13" stroke="#555" stroke-width="1.8"/></svg>
<svg class="abs" style="left:560.0px;top:614.5px" width="24" height="24.2" viewBox="0 0 24 24.2"><path d="M0 1.0 H19.5" stroke="#555" stroke-width="1.8"/><path d="M3.25 6.3 H16.25" stroke="#555" stroke-width="1.8"/><path d="M0 11.6 H19.5" stroke="#555" stroke-width="1.8"/><path d="M3.25 16.9 H16.25" stroke="#555" stroke-width="1.8"/></svg>
<svg class="abs" style="left:595.0px;top:614.5px" width="24" height="24.2" viewBox="0 0 24 24.2"><path d="M0 1.0 H19.5" stroke="#555" stroke-width="1.8"/><path d="M6.5 6.3 H19.5" stroke="#555" stroke-width="1.8"/><path d="M0 11.6 H19.5" stroke="#555" stroke-width="1.8"/><path d="M6.5 16.9 H19.5" stroke="#555" stroke-width="1.8"/></svg>
<svg class="abs" style="left:630.0px;top:613.0px" width="22" height="22" viewBox="0 0 22 22"><path d="M1 2 H21 M9 7.5 H21 M9 13 H21 M1 18.5 H21" stroke="#555" stroke-width="1.8"/><path d="M7 10 H1.5 M4 7.5 L1.5 10 L4 12.5" stroke="#2e7fd0" stroke-width="1.6" fill="none"/></svg>
<svg class="abs" style="left:665.0px;top:613.0px" width="22" height="22" viewBox="0 0 22 22"><path d="M1 2 H21 M9 7.5 H21 M9 13 H21 M1 18.5 H21" stroke="#555" stroke-width="1.8"/><path d="M1 10 H6.5 M4 7.5 L6.5 10 L4 12.5" stroke="#2e7fd0" stroke-width="1.6" fill="none"/></svg>
<svg class="abs" style="left:716.0px;top:568.0px" width="24" height="26" viewBox="0 0 24 26"><text x="3" y="11" font-family="Liberation Sans" font-size="13" fill="#444">ab</text><text x="1" y="23" font-family="Liberation Sans" font-size="13" fill="#444">c</text><path d="M20 13 V17 A3 3 0 0 1 17 20 H9 M12 17 L9 20 L12 23" stroke="#2e7fd0" stroke-width="1.6" fill="none"/></svg>
<svg class="abs" style="left:714.0px;top:612.0px" width="24" height="24" viewBox="0 0 24 24"><rect x="1.5" y="1.5" width="20" height="20" stroke="#555" stroke-width="1.6" fill="#cfe2f5"/><path d="M1.5 5 H21.5 M1.5 18 H21.5" stroke="#555" stroke-width="1.4"/><path d="M5 11.5 H18 M8 8.5 L5 11.5 L8 14.5 M15 8.5 L18 11.5 L15 14.5" stroke="#2e7fd0" stroke-width="1.5" fill="none"/></svg>
<svg class="abs" style="left:752.0px;top:620.8px" width="12" height="8.5" viewBox="0 0 12 8.5"><path d="M2 2 L6.0 6.5 L10 2" stroke="#444" stroke-width="1.5" fill="none"/></svg>
<div class="abs t" style="left:602.0px;top:657.0px;font-size:15px;line-height:30px;color:#3a3a3a;font-weight:normal;font-style:normal;transform:scaleX(0.9595);transform-origin:0 0;">Alignment</div>
<svg class="abs" style="left:770.0px;top:667.0px" width="12" height="12" viewBox="0 0 12 12"><path d="M1 11 V1 H6" stroke="#555" stroke-width="1.1" fill="none"/><path d="M4 4 L10.5 10.5 M5 10.5 H10.5 V5" stroke="#555" stroke-width="1.2" fill="none"/></svg>
<div class="abs" style="left:797.8px;top:564.7px;width:198.0px;height:32.1px;background:#efeeef;border:1.3px solid #a8a8a8;border-radius:5px;box-sizing:border-box;"></div>
<div class="abs t" style="left:801.0px;top:563.6px;font-size:18px;line-height:36px;color:#3a3a3a;font-weight:normal;font-style:normal;transform:scaleX(0.8588);transform-origin:0 0;">General</div>
<svg class="abs" style="left:981.5px;top:576.8px" width="12" height="8.5" viewBox="0 0 12 8.5"><path d="M2 2 L6.0 6.5 L10 2" stroke="#333" stroke-width="1.5" fill="none"/></svg>
<svg class="abs" style="left:802.0px;top:615.0px" width="26" height="22" viewBox="0 0 26 22"><rect x="1" y="2" width="20" height="14" stroke="#555" stroke-width="1.6" fill="none"/><text x="3" y="13" font-family="Liberation Sans" font-size="9" fill="#555">€$</text><ellipse cx="19" cy="14" rx="5" ry="2" fill="#f2a65a" stroke="#e07a2a" stroke-width="1"/><path d="M14 14 V19 A5 2 0 0 0 24 19 V14" fill="#f2a65a" stroke="#e07a2a" stroke-width="1"/></svg>
<svg class="abs" style="left:834.0px;top:620.8px" width="12" height="8.5" viewBox="0 0 12 8.5"><path d="M2 2 L6.0 6.5 L10 2" stroke="#444" stroke-width="1.5" fill="none"/></svg>
<div class="abs t" style="left:860.0px;top:601.0px;font-size:24px;line-height:48px;color:#555555;font-weight:normal;font-style:normal;transform:scaleX(0.9372);transform-origin:0 0;">%</div>
<svg class="abs" style="left:899.0px;top:614.0px" width="14" height="22" viewBox="0 0 14 22"><circle cx="7" cy="7" r="4.6" fill="#333"/><path d="M10.8 7.5 Q11 15 3.5 19" stroke="#333" stroke-width="2.6" fill="none"/></svg>
<div class="abs" style="left:925.0px;top:609.0px;width:1.2px;height:32.0px;background:#cfcfcf;"></div>
<svg class="abs" style="left:932.0px;top:612.0px" width="25" height="24" viewBox="0 0 25 24"><path d="M2 7 H10 M5 4 L2 7 L5 10" stroke="#2e7fd0" stroke-width="1.5" fill="none"/><text x="13" y="11" font-family="Liberation Sans" font-size="11" fill="#555">0</text><text x="4" y="23" font-family="Liberation Sans" font-size="11" fill="#555">.00</text></svg>
<svg class="abs" style="left:967.0px;top:612.0px" width="25" height="24" viewBox="0 0 25 24"><text x="5" y="11" font-family="Liberation Sans" font-size="11" fill="#555">.00</text><path d="M1 18 H10 M7 15 L10 18 L7 21" stroke="#2e7fd0" stroke-width="1.5" fill="none"/><text x="13" y="23" font-family="Liberation Sans" font-size="11" fill="#555">0</text></svg>
<div class="abs t" style="left:858.7px;top:657.0px;font-size:15px;line-height:30px;color:#3a3a3a;font-weight:normal;font-style:normal;transform:scaleX(0.9803);transform-origin:0 0;">Number</div>
<svg class="abs" style="left:991.0px;top:667.0px" width="12" height="12" viewBox="0 0 12 12"><path d="M1 11 V1 H6" stroke="#555" stroke-width="1.1" fill="none"/><path d="M4 4 L10.5 10.5 M5 10.5 H10.5 V5" stroke="#555" stroke-width="1.2" fill="none"/></svg>
<svg class="abs" style="left:1050.0px;top:564.0px" width="40" height="32" viewBox="0 0 40 32"><rect x="1.5" y="1.5" width="37" height="29" fill="none" stroke="#555" stroke-width="1.5"/><rect x="8" y="2" width="18" height="8.5" fill="#f08a96" stroke="#d33" stroke-width="1.3"/><rect x="8" y="11" width="9" height="8.5" fill="#4a90d8"/><rect x="8" y="20.5" width="18" height="9.5" fill="#f08a96" stroke="#d33" stroke-width="1.3"/><path d="M8 1.5 V30.5 M30 1.5 V30.5 M1.5 11 H38.5 M1.5 20.5 H38.5" stroke="#555" stroke-width="1.2"/></svg>
<div class="abs t" style="left:1027.5px;top:599.3px;font-size:17px;line-height:34px;color:#3a3a3a;font-weight:normal;font-style:normal;transform:scaleX(0.9934);transform-origin:0 0;">Conditional</div>
<div class="abs t" style="left:1022.0px;top:620.7px;font-size:17px;line-height:34px;color:#3a3a3a;font-weight:normal;font-style:normal;transform:scaleX(0.9846);transform-origin:0 0;">Formatting</div>
<svg class="abs" style="left:1105.5px;top:632.5px" width="11" height="8" viewBox="0 0 11 8"><path d="M2 2 L5.5 6 L9 2" stroke="#444" stroke-width="1.4" fill="none"/></svg>
<svg class="abs" style="left:1142.6px;top:564.0px" width="44" height="38" viewBox="0 0 44 38"><rect x="1" y="1" width="38" height="29" fill="none" stroke="#555" stroke-width="1.5"/><rect x="14" y="10" width="25" height="20" fill="#6aa5e0"/><path d="M14 1 V30 M26 1 V30 M1 10 H39 M1 20 H39" stroke="#555" stroke-width="1.2"/><path d="M41 12 L27 27" stroke="#555" stroke-width="3.5"/><path d="M41 12 L27 27" stroke="#eee" stroke-width="1.8"/><path d="M28 26 Q24 30 20 36 Q27 37 30 30 Z" fill="#3b8ad8"/></svg>
<div class="abs t" style="left:1127.0px;top:599.3px;font-size:17px;line-height:34px;color:#3a3a3a;font-weight:normal;font-style:normal;transform:scaleX(0.9357);transform-origin:0 0;">Format as</div>
<div class="abs t" style="left:1136.5px;top:620.7px;font-size:17px;line-height:34px;color:#3a3a3a;font-weight:normal;font-style:normal;transform:scaleX(0.9227);transform-origin:0 0;">Table</div>
<svg class="abs" style="left:1177.5px;top:632.5px" width="11" height="8" viewBox="0 0 11 8"><path d="M2 2 L5.5 6 L9 2" stroke="#444" stroke-width="1.4" fill="none"/></svg>
<svg class="abs" style="left:1217.0px;top:564.0px" width="44" height="38" viewBox="0 0 44 38"><rect x="1" y="1" width="38" height="29" fill="none" stroke="#555" stroke-width="1.5"/><rect x="7" y="6" width="26" height="19" fill="#6aa5e0"/><path d="M7 1 V30 M33 1 V30 M1 6 H39 M1 25 H39" stroke="#555" stroke-width="1.2"/><path d="M41 12 L27 27" stroke="#555" stroke-width="3.5"/><path d="M41 12 L27 27" stroke="#eee" stroke-width="1.8"/><path d="M28 26 Q24 30 20 36 Q27 37 30 30 Z" fill="#3b8ad8"/></svg>
<div class="abs t" style="left:1221.6px;top:599.3px;font-size:17px;line-height:34px;color:#3a3a3a;font-weight:normal;font-style:normal;transform:scaleX(0.9356);transform-origin:0 0;">Cell</div>
<div class="abs t" style="left:1207.8px;top:620.7px;font-size:17px;line-height:34px;color:#3a3a3a;font-weight:normal;font-style:normal;transform:scaleX(0.8900);transform-origin:0 0;">Styles</div>
<svg class="abs" style="left:1252.5px;top:632.5px" width="11" height="8" viewBox="0 0 11 8"><path d="M2 2 L5.5 6 L9 2" stroke="#444" stroke-width="1.4" fill="none"/></svg>
<div class="abs t" style="left:1124.0px;top:658.0px;font-size:15px;line-height:30px;color:#3a3a3a;font-weight:normal;font-style:normal;transform:scaleX(0.8813);transform-origin:0 0;">Styles</div>
<svg class="abs" style="left:1295.0px;top:560.0px" width="24" height="21" viewBox="0 0 24 21"><rect x="1" y="1" width="21" height="18" fill="none" stroke="#555" stroke-width="1.4"/><path d="M1 7 H22 M1 13 H22 M8 1 V19 M15 1 V19" stroke="#555" stroke-width="1"/><rect x="9" y="7" width="13" height="6" fill="#4a90d8"/><path d="M12 10 H2 M5 7 L2 10 L5 13" stroke="#2e7fd0" stroke-width="1.4" fill="none"/></svg>
<div class="abs t" style="left:1324.0px;top:553.5px;font-size:17px;line-height:34px;color:#3a3a3a;font-weight:normal;font-style:normal;transform:scaleX(0.9079);transform-origin:0 0;">Insert</div>
<svg class="abs" style="left:1386.0px;top:565.8px" width="12" height="8.5" viewBox="0 0 12 8.5"><path d="M2 2 L6.0 6.5 L10 2" stroke="#444" stroke-width="1.4" fill="none"/></svg>
<svg class="abs" style="left:1295.0px;top:595.0px" width="24" height="21" viewBox="0 0 24 21"><rect x="1" y="1" width="21" height="18" fill="none" stroke="#555" stroke-width="1.4" stroke-dasharray="3 1.5"/><path d="M1 7 H22 M1 13 H22" stroke="#555" stroke-width="1"/><rect x="6" y="6" width="8" height="8" fill="#4a90d8"/><path d="M15 6 L21 13 M21 6 L15 13" stroke="#e03030" stroke-width="1.5"/></svg>
<div class="abs t" style="left:1324.0px;top:588.7px;font-size:17px;line-height:34px;color:#3a3a3a;font-weight:normal;font-style:normal;transform:scaleX(0.9727);transform-origin:0 0;">Delete</div>
<svg class="abs" style="left:1395.0px;top:600.8px" width="12" height="8.5" viewBox="0 0 12 8.5"><path d="M2 2 L6.0 6.5 L10 2" stroke="#444" stroke-width="1.4" fill="none"/></svg>
<svg class="abs" style="left:1295.0px;top:629.5px" width="24" height="23" viewBox="0 0 24 23"><rect x="1" y="3" width="21" height="18" fill="none" stroke="#555" stroke-width="1.4"/><path d="M1 9 H22 M1 15 H22 M6 3 V21 M17 3 V21" stroke="#555" stroke-width="1"/><rect x="6" y="9" width="11" height="6" fill="#4a90d8"/><path d="M5 1 H18" stroke="#2e7fd0" stroke-width="1.4"/></svg>
<div class="abs t" style="left:1324.0px;top:623.7px;font-size:17px;line-height:34px;color:#3a3a3a;font-weight:normal;font-style:normal;transform:scaleX(0.9435);transform-origin:0 0;">Format</div>
<svg class="abs" style="left:1379.0px;top:635.8px" width="12" height="8.5" viewBox="0 0 12 8.5"><path d="M2 2 L6.0 6.5 L10 2" stroke="#444" stroke-width="1.4" fill="none"/></svg>
<div class="abs t" style="left:1338.0px;top:658.0px;font-size:15px;line-height:30px;color:#3a3a3a;font-weight:normal;font-style:normal;transform:scaleX(0.8608);transform-origin:0 0;">Cells</div>
<svg class="abs" style="left:1447.0px;top:559.0px" width="21" height="22" viewBox="0 0 21 22"><path d="M18 2 H2 L10 10.5 L2 19 H18" stroke="#3a3a3a" stroke-width="1.9" fill="none"/></svg>
<svg class="abs" style="left:1484.0px;top:565.8px" width="12" height="8.5" viewBox="0 0 12 8.5"><path d="M2 2 L6.0 6.5 L10 2" stroke="#444" stroke-width="1.5" fill="none"/></svg>
<svg class="abs" style="left:1445.0px;top:594.0px" width="24" height="22" viewBox="0 0 24 22"><rect x="1.5" y="1.5" width="20" height="19" stroke="#555" stroke-width="1.7" fill="none"/><path d="M1.5 5 H21.5" stroke="#555" stroke-width="1.3"/><path d="M11.5 8 V17 M7.5 13 L11.5 17 L15.5 13" stroke="#2e7fd0" stroke-width="1.7" fill="none"/></svg>
<svg class="abs" style="left:1475.0px;top:600.8px" width="12" height="8.5" viewBox="0 0 12 8.5"><path d="M2 2 L6.0 6.5 L10 2" stroke="#444" stroke-width="1.5" fill="none"/></svg>
<svg class="abs" style="left:1445.0px;top:628.0px" width="24" height="24" viewBox="0 0 24 24"><path d="M2 14 L12 4 L22 12 L12 22 Z" stroke="#a33fb0" stroke-width="1.6" fill="#f3e6f3"/><path d="M2 14 L7 9 L17 17 L12 22 Z" fill="#c06ac8" stroke="#a33fb0" stroke-width="1.5"/></svg>
<svg class="abs" style="left:1475.0px;top:635.8px" width="12" height="8.5" viewBox="0 0 12 8.5"><path d="M2 2 L6.0 6.5 L10 2" stroke="#444" stroke-width="1.5" fill="none"/></svg>
<svg class="abs" style="left:1515.0px;top:559.0px" width="46" height="42" viewBox="0 0 46 42"><text x="1" y="16" font-family="Liberation Sans" font-size="18" fill="#2e8fd8">A</text><text x="2" y="38" font-family="Liberation Sans" font-size="18" fill="#444">Z</text><path d="M21 6 H42 L34 17 V27 H29 V17 Z" stroke="#444" stroke-width="1.7" fill="none" stroke-linejoin="round"/></svg>
<div class="abs t" style="left:1515.0px;top:599.3px;font-size:17px;line-height:34px;color:#3a3a3a;font-weight:normal;font-style:normal;transform:scaleX(0.9864);transform-origin:0 0;">Sort &amp;</div>
<div class="abs t" style="left:1512.7px;top:621.2px;font-size:17px;line-height:34px;color:#3a3a3a;font-weight:normal;font-style:normal;transform:scaleX(0.9873);transform-origin:0 0;">Filter</div>
<svg class="abs" style="left:1552.0px;top:633.0px" width="11" height="8" viewBox="0 0 11 8"><path d="M2 2 L5.5 6 L9 2" stroke="#444" stroke-width="1.4" fill="none"/></svg>
<svg class="abs" style="left:1580.0px;top:558.0px" width="46" height="44" viewBox="0 0 46 44"><circle cx="27" cy="16" r="14" stroke="#444" stroke-width="1.8" fill="none"/><path d="M17 26 L2 41" stroke="#444" stroke-width="1.8"/></svg>
<div class="abs t" style="left:1578.0px;top:599.3px;font-size:17px;line-height:34px;color:#3a3a3a;font-weight:normal;font-style:normal;transform:scaleX(0.9912);transform-origin:0 0;">Find &amp;</div>
<div class="abs t" style="left:1573.0px;top:621.2px;font-size:17px;line-height:34px;color:#3a3a3a;font-weight:normal;font-style:normal;transform:scaleX(0.9101);transform-origin:0 0;">Select</div>
<svg class="abs" style="left:1621.5px;top:633.0px" width="11" height="8" viewBox="0 0 11 8"><path d="M2 2 L5.5 6 L9 2" stroke="#444" stroke-width="1.4" fill="none"/></svg>
<div class="abs t" style="left:1515.0px;top:658.0px;font-size:15px;line-height:30px;color:#3a3a3a;font-weight:normal;font-style:normal;transform:scaleX(0.9375);transform-origin:0 0;">Editing</div>
<svg class="abs" style="left:1681.0px;top:556.0px" width="40" height="44" viewBox="0 0 40 44"><rect x="3" y="4" width="28" height="38" fill="#e2e2e2" stroke="#c8c8c8" stroke-width="1.6"/><path d="M10 24 L26 8 L34 16 L18 32 Z" fill="#d0d0d0" stroke="#bdbdbd" stroke-width="1.5"/><path d="M26 8 L31 3 L38 10 L34 14" stroke="#bdbdbd" stroke-width="1.5" fill="none"/></svg>
<div class="abs t" style="left:1662.0px;top:599.0px;font-size:17px;line-height:34px;color:#bdbdbd;font-weight:normal;font-style:normal;transform:scaleX(0.9408);transform-origin:0 0;">Sensitivity</div>
<svg class="abs" style="left:1691.0px;top:632.2px" width="12" height="8.5" viewBox="0 0 12 8.5"><path d="M2 2 L6.0 6.5 L10 2" stroke="#c3c3c3" stroke-width="1.4" fill="none"/></svg>
<div class="abs t" style="left:1666.0px;top:658.0px;font-size:15px;line-height:30px;color:#3a3a3a;font-weight:normal;font-style:normal;transform:scaleX(0.9034);transform-origin:0 0;">Sensitivity</div>
<svg class="abs" style="left:1771.0px;top:559.0px" width="42" height="42" viewBox="0 0 42 42"><rect x="1.5" y="1.5" width="38" height="38" stroke="#e0663a" stroke-width="2.2" fill="none"/><rect x="6" y="6" width="12.5" height="12.5" stroke="#e0663a" stroke-width="2" fill="none"/><rect x="22.5" y="6" width="12.5" height="12.5" stroke="#e0663a" stroke-width="2" fill="none"/><rect x="6" y="22.5" width="12.5" height="12.5" stroke="#e0663a" stroke-width="2" fill="none"/><rect x="22.5" y="22.5" width="12.5" height="12.5" stroke="#e0663a" stroke-width="2" fill="none"/></svg>
<div class="abs t" style="left:1763.0px;top:599.3px;font-size:17px;line-height:34px;color:#3a3a3a;font-weight:normal;font-style:normal;transform:scaleX(0.9888);transform-origin:0 0;">Add-ins</div>
<div class="abs t" style="left:1765.5px;top:657.8px;font-size:15px;line-height:30px;color:#3a3a3a;font-weight:normal;font-style:normal;transform:scaleX(0.9614);transform-origin:0 0;">Add-ins</div>
<svg class="abs" style="left:1855.0px;top:560.0px" width="42" height="40" viewBox="0 0 42 40"><defs><linearGradient id="cpa" x1="0" y1="0" x2="1" y2="1"><stop offset="0" stop-color="#2aa0f0"/><stop offset="0.45" stop-color="#3ec060"/><stop offset="0.7" stop-color="#f0b020"/><stop offset="1" stop-color="#f05030"/></linearGradient><linearGradient id="cpb" x1="0" y1="0" x2="1" y2="1"><stop offset="0" stop-color="#2050d0"/><stop offset="0.5" stop-color="#a050e0"/><stop offset="1" stop-color="#f060a0"/></linearGradient></defs><path d="M14 3 C8 3 6 8 4 16 C2 26 3 30 9 30 L17 30 C22 30 22 22 24 14 C26 7 27 3 32 3 Z" fill="url(#cpa)"/><path d="M27 38 C33 38 35 33 37 25 C39 15 38 11 32 11 L24 11 C19 11 19 19 17 27 C15 34 14 38 9 38 Z" fill="url(#cpb)"/></svg>
<div class="abs t" style="left:1849.0px;top:599.0px;font-size:17px;line-height:34px;color:#3a3a3a;font-weight:normal;font-style:normal;transform:scaleX(1.0204);transform-origin:0 0;">Copilot</div>
<svg class="abs" style="left:1938.0px;top:560.0px" width="42" height="41" viewBox="0 0 42 41"><path d="M6 2 H28 L33 7 V38 H6 Z" stroke="#555" stroke-width="1.6" fill="none"/><rect x="0" y="7" width="26" height="12" fill="#e04040"/><text x="2" y="17" font-family="Liberation Sans" font-size="10" font-weight="bold" fill="#fff">PDF</text><circle cx="31" cy="30" r="9" fill="#eeedee" stroke="#555" stroke-width="1.6"/><path d="M31 25 V35 M26 30 H36" stroke="#555" stroke-width="1.6"/></svg>
<div class="abs t" style="left:1933.5px;top:599.3px;font-size:17px;line-height:34px;color:#3a3a3a;font-weight:normal;font-style:normal;transform:scaleX(0.9113);transform-origin:0 0;">Create</div>
<div class="abs t" style="left:1943.0px;top:620.6px;font-size:17px;line-height:34px;color:#3a3a3a;font-weight:normal;font-style:normal;transform:scaleX(0.8382);transform-origin:0 0;">PDF</div>
<svg class="abs" style="left:1998.0px;top:560.0px" width="42" height="40" viewBox="0 0 42 40"><path d="M3 38 L6 18 L22 8 L32 24 L14 36 Z" stroke="#555" stroke-width="1.6" fill="none" stroke-linejoin="round"/><path d="M20 6 L28 0.5 L39 18 L31 23" stroke="#555" stroke-width="1.6" fill="none"/><circle cx="14" cy="26" r="3" stroke="#e04050" stroke-width="1.5" fill="none"/><path d="M12 28 L4 37" stroke="#e04050" stroke-width="1.5"/></svg>
<div class="abs t" style="left:2000.7px;top:599.3px;font-size:17px;line-height:34px;color:#3a3a3a;font-weight:normal;font-style:normal;transform:scaleX(0.9199);transform-origin:0 0;">Sign</div>
<div class="abs t" style="left:1957.6px;top:657.8px;font-size:15px;line-height:30px;color:#3a3a3a;font-weight:normal;font-style:normal;transform:scaleX(0.8400);transform-origin:0 0;">WPS PDF</div>
<svg class="abs" style="left:2101.0px;top:661.5px" width="17" height="11" viewBox="0 0 17 11"><path d="M2 2 L8.5 9 L15 2" stroke="#444" stroke-width="1.6" fill="none"/></svg>
</div>
<div class="abs" style="left:20.0px;top:685.0px;width:2120.0px;height:57.0px;background:linear-gradient(180deg,#cbcbca 0px,#d3d3d2 4px,#d7d7d5 12px,#d8d8d6 100%);"></div>
<div class="abs" style="left:32.8px;top:698.5px;width:137.2px;height:34.1px;background:#ebeaeb;border-radius:6px;"></div>
<div class="abs t" style="left:40.0px;top:696.5px;font-size:19px;line-height:38px;color:#333;font-weight:normal;font-style:normal;transform:scaleX(1.0229);transform-origin:0 0;">M1</div>
<svg class="abs" style="left:148.5px;top:710.8px" width="16" height="10.5" viewBox="0 0 16 10.5"><path d="M2 2 L8.0 8.5 L14 2" stroke="#333" stroke-width="1.6" fill="none"/></svg>
<div class="abs" style="left:183.5px;top:706.0px;width:3.5px;height:3.5px;background:#444;border-radius:2px;"></div>
<div class="abs" style="left:183.5px;top:712.5px;width:3.5px;height:3.5px;background:#444;border-radius:2px;"></div>
<div class="abs" style="left:183.5px;top:719.0px;width:3.5px;height:3.5px;background:#444;border-radius:2px;"></div>
<div class="abs" style="left:200.6px;top:698.5px;width:115.4px;height:34.1px;background:#ebeaeb;border-radius:6px;"></div>
<svg class="abs" style="left:207.0px;top:706.0px" width="20" height="20" viewBox="0 0 20 20"><path d="M2 2 L18 18 M18 2 L2 18" stroke="#9a9a9a" stroke-width="1.6"/></svg>
<svg class="abs" style="left:238.0px;top:706.0px" width="24" height="20" viewBox="0 0 24 20"><path d="M2 10 L8.5 17 L22 3" stroke="#9a9a9a" stroke-width="1.6" fill="none"/></svg>
<div class="abs t" style="left:273.0px;top:692.5px;font-size:23px;line-height:46px;color:#222;font-weight:normal;font-style:italic;transform:scaleX(1.1739);transform-origin:0 0;font-family:'Liberation Serif',serif;-webkit-text-stroke-width:0.4px;">fx</div>
<svg class="abs" style="left:300.0px;top:711.0px" width="15" height="10" viewBox="0 0 15 10"><path d="M2 2 L7.5 8 L13 2" stroke="#555" stroke-width="1.4" fill="none"/></svg>
<div class="abs" style="left:324.5px;top:698.5px;width:1803.5px;height:34.1px;background:#ebeaeb;border-radius:6px;"></div>
<svg class="abs" style="left:2107.5px;top:709.5px" width="17" height="11" viewBox="0 0 17 11"><path d="M2 2 L8.5 9 L15 2" stroke="#444" stroke-width="1.6" fill="none"/></svg>
<div class="abs" style="left:20.0px;top:741.5px;width:2120.0px;height:710.0px;background:#edebed;"></div>
<div class="abs" style="left:20.0px;top:741.5px;width:2092.0px;height:29.5px;background:#e2e1e2;"></div>
<div class="abs" style="left:20.0px;top:770.0px;width:2092.0px;height:1.5px;background:#c3c3c3;"></div>
<div class="abs" style="left:20.0px;top:771.5px;width:40.5px;height:680.0px;background:#e3e2e3;"></div>
<div class="abs" style="left:20.0px;top:771.5px;width:40.5px;height:28.2px;background:#d6d5d6;"></div>
<div class="abs" style="left:59.8px;top:741.5px;width:1.2px;height:710.0px;background:#c9c9c9;"></div>
<svg class="abs" style="left:38.0px;top:747.0px" width="20" height="21" viewBox="0 0 20 21"><path d="M18 1 V20 H1 Z" fill="#d4d3d4"/></svg>
<div class="abs" style="left:1523.6px;top:741.5px;width:124.4px;height:29.0px;background:#d3d2d3;"></div>
<div class="abs" style="left:1523.6px;top:769.0px;width:124.4px;height:2.3px;background:#2f7a55;"></div>
<div class="abs" style="left:60.0px;top:741.5px;width:1.2px;height:29.0px;background:#cfcfcf;"></div>
<div class="abs" style="left:59.7px;top:771.5px;width:1.6px;height:680.0px;background:#d9d7d9;"></div>
<div class="abs" style="left:245.5px;top:741.5px;width:1.2px;height:29.0px;background:#cfcfcf;"></div>
<div class="abs" style="left:245.2px;top:771.5px;width:1.6px;height:680.0px;background:#d9d7d9;"></div>
<div class="abs" style="left:431.3px;top:741.5px;width:1.2px;height:29.0px;background:#cfcfcf;"></div>
<div class="abs" style="left:431.0px;top:771.5px;width:1.6px;height:680.0px;background:#d9d7d9;"></div>
<div class="abs" style="left:508.5px;top:741.5px;width:1.2px;height:29.0px;background:#cfcfcf;"></div>
<div class="abs" style="left:508.2px;top:771.5px;width:1.6px;height:680.0px;background:#d9d7d9;"></div>
<div class="abs" style="left:624.5px;top:741.5px;width:1.2px;height:29.0px;background:#cfcfcf;"></div>
<div class="abs" style="left:624.2px;top:771.5px;width:1.6px;height:680.0px;background:#d9d7d9;"></div>
<div class="abs" style="left:765.5px;top:741.5px;width:1.2px;height:29.0px;background:#cfcfcf;"></div>
<div class="abs" style="left:765.2px;top:771.5px;width:1.6px;height:680.0px;background:#d9d7d9;"></div>
<div class="abs" style="left:907.3px;top:741.5px;width:1.2px;height:29.0px;background:#cfcfcf;"></div>
<div class="abs" style="left:907.0px;top:771.5px;width:1.6px;height:680.0px;background:#d9d7d9;"></div>
<div class="abs" style="left:1027.2px;top:741.5px;width:1.2px;height:29.0px;background:#cfcfcf;"></div>
<div class="abs" style="left:1026.9px;top:771.5px;width:1.6px;height:680.0px;background:#d9d7d9;"></div>
<div class="abs" style="left:1145.5px;top:741.5px;width:1.2px;height:29.0px;background:#cfcfcf;"></div>
<div class="abs" style="left:1145.2px;top:771.5px;width:1.6px;height:680.0px;background:#d9d7d9;"></div>
<div class="abs" style="left:1285.2px;top:741.5px;width:1.2px;height:29.0px;background:#cfcfcf;"></div>
<div class="abs" style="left:1284.9px;top:771.5px;width:1.6px;height:680.0px;background:#d9d7d9;"></div>
<div class="abs" style="left:1403.9px;top:741.5px;width:1.2px;height:29.0px;background:#cfcfcf;"></div>
<div class="abs" style="left:1403.6px;top:771.5px;width:1.6px;height:680.0px;background:#d9d7d9;"></div>
<div class="abs" style="left:1523.1px;top:741.5px;width:1.2px;height:29.0px;background:#cfcfcf;"></div>
<div class="abs" style="left:1522.8px;top:771.5px;width:1.6px;height:680.0px;background:#d9d7d9;"></div>
<div class="abs" style="left:1647.5px;top:741.5px;width:1.2px;height:29.0px;background:#cfcfcf;"></div>
<div class="abs" style="left:1647.2px;top:771.5px;width:1.6px;height:680.0px;background:#d9d7d9;"></div>
<div class="abs" style="left:1771.2px;top:741.5px;width:1.2px;height:29.0px;background:#cfcfcf;"></div>
<div class="abs" style="left:1770.9px;top:771.5px;width:1.6px;height:680.0px;background:#d9d7d9;"></div>
<div class="abs" style="left:1894.5px;top:741.5px;width:1.2px;height:29.0px;background:#cfcfcf;"></div>
<div class="abs" style="left:1894.2px;top:771.5px;width:1.6px;height:680.0px;background:#d9d7d9;"></div>
<div class="abs" style="left:2018.3px;top:741.5px;width:1.2px;height:29.0px;background:#cfcfcf;"></div>
<div class="abs" style="left:2018.0px;top:771.5px;width:1.6px;height:680.0px;background:#d9d7d9;"></div>
<div class="abs" style="left:20.0px;top:799.1px;width:40.5px;height:1.1px;background:#cfcfcf;"></div>
<div class="abs" style="left:60.5px;top:798.9px;width:2052.0px;height:1.6px;background:#d9d7d9;"></div>
<div class="abs" style="left:20.0px;top:827.8px;width:40.5px;height:1.1px;background:#cfcfcf;"></div>
<div class="abs" style="left:60.5px;top:827.6px;width:2052.0px;height:1.6px;background:#d9d7d9;"></div>
<div class="abs" style="left:20.0px;top:856.6px;width:40.5px;height:1.1px;background:#cfcfcf;"></div>
<div class="abs" style="left:60.5px;top:856.4px;width:2052.0px;height:1.6px;background:#d9d7d9;"></div>
<div class="abs" style="left:20.0px;top:885.3px;width:40.5px;height:1.1px;background:#cfcfcf;"></div>
<div class="abs" style="left:60.5px;top:885.1px;width:2052.0px;height:1.6px;background:#d9d7d9;"></div>
<div class="abs" style="left:20.0px;top:914.0px;width:40.5px;height:1.1px;background:#cfcfcf;"></div>
<div class="abs" style="left:60.5px;top:913.8px;width:2052.0px;height:1.6px;background:#d9d7d9;"></div>
<div class="abs" style="left:20.0px;top:942.7px;width:40.5px;height:1.1px;background:#cfcfcf;"></div>
<div class="abs" style="left:60.5px;top:942.5px;width:2052.0px;height:1.6px;background:#d9d7d9;"></div>
<div class="abs" style="left:20.0px;top:971.4px;width:40.5px;height:1.1px;background:#cfcfcf;"></div>
<div class="abs" style="left:60.5px;top:971.2px;width:2052.0px;height:1.6px;background:#d9d7d9;"></div>
<div class="abs" style="left:20.0px;top:1000.2px;width:40.5px;height:1.1px;background:#cfcfcf;"></div>
<div class="abs" style="left:60.5px;top:1000.0px;width:2052.0px;height:1.6px;background:#d9d7d9;"></div>
<div class="abs" style="left:20.0px;top:1028.9px;width:40.5px;height:1.1px;background:#cfcfcf;"></div>
<div class="abs" style="left:60.5px;top:1028.7px;width:2052.0px;height:1.6px;background:#d9d7d9;"></div>
<div class="abs" style="left:20.0px;top:1057.6px;width:40.5px;height:1.1px;background:#cfcfcf;"></div>
<div class="abs" style="left:60.5px;top:1057.4px;width:2052.0px;height:1.6px;background:#d9d7d9;"></div>
<div class="abs" style="left:20.0px;top:1086.3px;width:40.5px;height:1.1px;background:#cfcfcf;"></div>
<div class="abs" style="left:60.5px;top:1086.1px;width:2052.0px;height:1.6px;background:#d9d7d9;"></div>
<div class="abs" style="left:20.0px;top:1115.0px;width:40.5px;height:1.1px;background:#cfcfcf;"></div>
<div class="abs" style="left:60.5px;top:1114.8px;width:2052.0px;height:1.6px;background:#d9d7d9;"></div>
<div class="abs" style="left:20.0px;top:1143.8px;width:40.5px;height:1.1px;background:#cfcfcf;"></div>
<div class="abs" style="left:60.5px;top:1143.6px;width:2052.0px;height:1.6px;background:#d9d7d9;"></div>
<div class="abs" style="left:20.0px;top:1172.5px;width:40.5px;height:1.1px;background:#cfcfcf;"></div>
<div class="abs" style="left:60.5px;top:1172.3px;width:2052.0px;height:1.6px;background:#d9d7d9;"></div>
<div class="abs" style="left:20.0px;top:1201.2px;width:40.5px;height:1.1px;background:#cfcfcf;"></div>
<div class="abs" style="left:60.5px;top:1201.0px;width:2052.0px;height:1.6px;background:#d9d7d9;"></div>
<div class="abs" style="left:20.0px;top:1229.9px;width:40.5px;height:1.1px;background:#cfcfcf;"></div>
<div class="abs" style="left:60.5px;top:1229.7px;width:2052.0px;height:1.6px;background:#d9d7d9;"></div>
<div class="abs" style="left:20.0px;top:1258.6px;width:40.5px;height:1.1px;background:#cfcfcf;"></div>
<div class="abs" style="left:60.5px;top:1258.4px;width:2052.0px;height:1.6px;background:#d9d7d9;"></div>
<div class="abs" style="left:20.0px;top:1287.4px;width:40.5px;height:1.1px;background:#cfcfcf;"></div>
<div class="abs" style="left:60.5px;top:1287.2px;width:2052.0px;height:1.6px;background:#d9d7d9;"></div>
<div class="abs" style="left:20.0px;top:1316.1px;width:40.5px;height:1.1px;background:#cfcfcf;"></div>
<div class="abs" style="left:60.5px;top:1315.9px;width:2052.0px;height:1.6px;background:#d9d7d9;"></div>
<div class="abs" style="left:20.0px;top:1344.8px;width:40.5px;height:1.1px;background:#cfcfcf;"></div>
<div class="abs" style="left:60.5px;top:1344.6px;width:2052.0px;height:1.6px;background:#d9d7d9;"></div>
<div class="abs" style="left:20.0px;top:1373.5px;width:40.5px;height:1.1px;background:#cfcfcf;"></div>
<div class="abs" style="left:60.5px;top:1373.3px;width:2052.0px;height:1.6px;background:#d9d7d9;"></div>
<div class="abs" style="left:20.0px;top:1402.2px;width:40.5px;height:1.1px;background:#cfcfcf;"></div>
<div class="abs" style="left:60.5px;top:1402.0px;width:2052.0px;height:1.6px;background:#d9d7d9;"></div>
<div class="abs" style="left:20.0px;top:1431.0px;width:40.5px;height:1.1px;background:#cfcfcf;"></div>
<div class="abs" style="left:60.5px;top:1430.8px;width:2052.0px;height:1.6px;background:#d9d7d9;"></div>
<div class="abs" style="left:20.0px;top:1459.7px;width:40.5px;height:1.1px;background:#cfcfcf;"></div>
<div class="abs" style="left:60.5px;top:1459.5px;width:2052.0px;height:1.6px;background:#d9d7d9;"></div>
<div class="abs" style="left:58.8px;top:771.5px;width:2.6px;height:28.7px;background:#2f7a55;"></div>
<div class="abs" style="left:907.8px;top:771.5px;width:120.0px;height:57.4px;background:#eeea10;"></div>
<div class="abs" style="left:1146.0px;top:771.5px;width:139.7px;height:57.4px;background:#eeea10;"></div>
<div class="abs t" style="left:-846.8px;width:2000px;text-align:center;top:737.5px;font-size:20px;line-height:40px;color:#444;font-weight:normal;font-style:normal;">B</div>
<div class="abs t" style="left:-661.1px;width:2000px;text-align:center;top:737.5px;font-size:20px;line-height:40px;color:#444;font-weight:normal;font-style:normal;">C</div>
<div class="abs t" style="left:-529.6px;width:2000px;text-align:center;top:737.5px;font-size:20px;line-height:40px;color:#444;font-weight:normal;font-style:normal;">D</div>
<div class="abs t" style="left:-433.0px;width:2000px;text-align:center;top:737.5px;font-size:20px;line-height:40px;color:#444;font-weight:normal;font-style:normal;">E</div>
<div class="abs t" style="left:-304.5px;width:2000px;text-align:center;top:737.5px;font-size:20px;line-height:40px;color:#444;font-weight:normal;font-style:normal;">F</div>
<div class="abs t" style="left:-163.1px;width:2000px;text-align:center;top:737.5px;font-size:20px;line-height:40px;color:#444;font-weight:normal;font-style:normal;">G</div>
<div class="abs t" style="left:-32.2px;width:2000px;text-align:center;top:737.5px;font-size:20px;line-height:40px;color:#444;font-weight:normal;font-style:normal;">H</div>
<div class="abs t" style="left:86.8px;width:2000px;text-align:center;top:737.5px;font-size:20px;line-height:40px;color:#444;font-weight:normal;font-style:normal;">I</div>
<div class="abs t" style="left:215.8px;width:2000px;text-align:center;top:737.5px;font-size:20px;line-height:40px;color:#444;font-weight:normal;font-style:normal;">J</div>
<div class="abs t" style="left:345.1px;width:2000px;text-align:center;top:737.5px;font-size:20px;line-height:40px;color:#444;font-weight:normal;font-style:normal;">K</div>
<div class="abs t" style="left:464.0px;width:2000px;text-align:center;top:737.5px;font-size:20px;line-height:40px;color:#444;font-weight:normal;font-style:normal;">L</div>
<div class="abs t" style="left:585.8px;width:2000px;text-align:center;top:737.5px;font-size:20px;line-height:40px;color:#2f7a55;font-weight:normal;font-style:normal;">M</div>
<div class="abs t" style="left:709.8px;width:2000px;text-align:center;top:737.5px;font-size:20px;line-height:40px;color:#444;font-weight:normal;font-style:normal;">N</div>
<div class="abs t" style="left:833.3px;width:2000px;text-align:center;top:737.5px;font-size:20px;line-height:40px;color:#444;font-weight:normal;font-style:normal;">O</div>
<div class="abs t" style="left:956.9px;width:2000px;text-align:center;top:737.5px;font-size:20px;line-height:40px;color:#444;font-weight:normal;font-style:normal;">P</div>
<div class="abs t" style="left:1080.7px;width:2000px;text-align:center;top:737.5px;font-size:20px;line-height:40px;color:#444;font-weight:normal;font-style:normal;">Q</div>
<div class="abs t" style="left:-959.5px;width:2000px;text-align:center;top:765.9px;font-size:20px;line-height:40px;color:#217346;font-weight:normal;font-style:normal;letter-spacing:-0.5px;">1</div>
<div class="abs t" style="left:-959.5px;width:2000px;text-align:center;top:794.6px;font-size:20px;line-height:40px;color:#555;font-weight:normal;font-style:normal;letter-spacing:-0.5px;">2</div>
<div class="abs t" style="left:-959.5px;width:2000px;text-align:center;top:823.3px;font-size:20px;line-height:40px;color:#555;font-weight:normal;font-style:normal;letter-spacing:-0.5px;">3</div>
<div class="abs t" style="left:-959.5px;width:2000px;text-align:center;top:852.0px;font-size:20px;line-height:40px;color:#555;font-weight:normal;font-style:normal;letter-spacing:-0.5px;">4</div>
<div class="abs t" style="left:-959.5px;width:2000px;text-align:center;top:880.7px;font-size:20px;line-height:40px;color:#555;font-weight:normal;font-style:normal;letter-spacing:-0.5px;">5</div>
<div class="abs t" style="left:-959.5px;width:2000px;text-align:center;top:909.5px;font-size:20px;line-height:40px;color:#555;font-weight:normal;font-style:normal;letter-spacing:-0.5px;">6</div>
<div class="abs t" style="left:-959.5px;width:2000px;text-align:center;top:938.2px;font-size:20px;line-height:40px;color:#555;font-weight:normal;font-style:normal;letter-spacing:-0.5px;">7</div>
<div class="abs t" style="left:-959.5px;width:2000px;text-align:center;top:966.9px;font-size:20px;line-height:40px;color:#555;font-weight:normal;font-style:normal;letter-spacing:-0.5px;">8</div>
<div class="abs t" style="left:-959.5px;width:2000px;text-align:center;top:995.6px;font-size:20px;line-height:40px;color:#555;font-weight:normal;font-style:normal;letter-spacing:-0.5px;">9</div>
<div class="abs t" style="left:-959.5px;width:2000px;text-align:center;top:1024.3px;font-size:20px;line-height:40px;color:#555;font-weight:normal;font-style:normal;letter-spacing:-0.5px;">10</div>
<div class="abs t" style="left:-959.5px;width:2000px;text-align:center;top:1053.1px;font-size:20px;line-height:40px;color:#555;font-weight:normal;font-style:normal;letter-spacing:-0.5px;">11</div>
<div class="abs t" style="left:-959.5px;width:2000px;text-align:center;top:1081.8px;font-size:20px;line-height:40px;color:#555;font-weight:normal;font-style:normal;letter-spacing:-0.5px;">12</div>
<div class="abs t" style="left:-959.5px;width:2000px;text-align:center;top:1110.5px;font-size:20px;line-height:40px;color:#555;font-weight:normal;font-style:normal;letter-spacing:-0.5px;">13</div>
<div class="abs t" style="left:-959.5px;width:2000px;text-align:center;top:1139.2px;font-size:20px;line-height:40px;color:#555;font-weight:normal;font-style:normal;letter-spacing:-0.5px;">14</div>
<div class="abs t" style="left:-959.5px;width:2000px;text-align:center;top:1167.9px;font-size:20px;line-height:40px;color:#555;font-weight:normal;font-style:normal;letter-spacing:-0.5px;">15</div>
<div class="abs t" style="left:-959.5px;width:2000px;text-align:center;top:1196.7px;font-size:20px;line-height:40px;color:#555;font-weight:normal;font-style:normal;letter-spacing:-0.5px;">16</div>
<div class="abs t" style="left:-959.5px;width:2000px;text-align:center;top:1225.4px;font-size:20px;line-height:40px;color:#555;font-weight:normal;font-style:normal;letter-spacing:-0.5px;">17</div>
<div class="abs t" style="left:-959.5px;width:2000px;text-align:center;top:1254.1px;font-size:20px;line-height:40px;color:#555;font-weight:normal;font-style:normal;letter-spacing:-0.5px;">18</div>
<div class="abs t" style="left:-959.5px;width:2000px;text-align:center;top:1282.8px;font-size:20px;line-height:40px;color:#555;font-weight:normal;font-style:normal;letter-spacing:-0.5px;">19</div>
<div class="abs t" style="left:-959.5px;width:2000px;text-align:center;top:1311.5px;font-size:20px;line-height:40px;color:#555;font-weight:normal;font-style:normal;letter-spacing:-0.5px;">20</div>
<div class="abs t" style="left:-959.5px;width:2000px;text-align:center;top:1340.3px;font-size:20px;line-height:40px;color:#555;font-weight:normal;font-style:normal;letter-spacing:-0.5px;">21</div>
<div class="abs t" style="left:-959.5px;width:2000px;text-align:center;top:1369.0px;font-size:20px;line-height:40px;color:#555;font-weight:normal;font-style:normal;letter-spacing:-0.5px;">22</div>
<div class="abs t" style="left:-959.5px;width:2000px;text-align:center;top:1397.7px;font-size:20px;line-height:40px;color:#555;font-weight:normal;font-style:normal;letter-spacing:-0.5px;">23</div>
<div class="abs t" style="left:-959.5px;width:2000px;text-align:center;top:1426.4px;font-size:20px;line-height:40px;color:#555;font-weight:normal;font-style:normal;letter-spacing:-0.5px;">24</div>
<div class="abs t" style="left:65.0px;top:763.9px;font-size:22px;line-height:44px;letter-spacing:-0.45px;color:#111;font-weight:bold;-webkit-text-stroke:0.35px #111;">Surname</div>
<div class="abs t" style="left:250.5px;top:763.9px;font-size:22px;line-height:44px;letter-spacing:-0.45px;color:#111;font-weight:bold;-webkit-text-stroke:0.35px #111;">TRIM</div>
<div class="abs t" style="left:435.6px;top:763.9px;font-size:22px;line-height:44px;letter-spacing:-0.45px;color:#111;font-weight:bold;-webkit-text-stroke:0.35px #111;">Age</div>
<div class="abs t" style="left:513.4px;top:763.9px;font-size:22px;line-height:44px;letter-spacing:-0.45px;color:#111;font-weight:bold;-webkit-text-stroke:0.35px #111;">Gender</div>
<div class="abs t" style="left:636.5px;top:763.9px;font-size:22px;line-height:44px;letter-spacing:-0.45px;color:#111;font-weight:bold;-webkit-text-stroke:0.35px #111;">Salary</div>
<div class="abs t" style="left:65.0px;top:792.6px;font-size:22px;line-height:44px;letter-spacing:-0.45px;color:#111;font-weight:normal;-webkit-text-stroke:0.35px #111;">Chaihirankarn</div>
<div class="abs t" style="left:250.5px;top:792.6px;font-size:22px;line-height:44px;letter-spacing:-0.45px;color:#111;font-weight:normal;-webkit-text-stroke:0.35px #111;">Chaihirankarn</div>
<div class="abs t" style="left:435.6px;top:792.6px;font-size:22px;line-height:44px;letter-spacing:-0.45px;color:#111;font-weight:normal;-webkit-text-stroke:0.35px #111;">23</div>
<div class="abs t" style="left:513.4px;top:792.6px;font-size:22px;line-height:44px;letter-spacing:-0.45px;color:#111;font-weight:normal;-webkit-text-stroke:0.35px #111;">Male</div>
<div class="abs t" style="left:154.0px;width:600px;text-align:right;top:792.6px;font-size:22px;line-height:44px;letter-spacing:-0.45px;color:#111;font-weight:normal;-webkit-text-stroke:0.35px #111;">131,031</div>
<div class="abs t" style="left:65.0px;top:821.3px;font-size:22px;line-height:44px;letter-spacing:-0.45px;color:#111;font-weight:normal;-webkit-text-stroke:0.35px #111;">Prachayaroch</div>
<div class="abs t" style="left:250.5px;top:821.3px;font-size:22px;line-height:44px;letter-spacing:-0.45px;color:#111;font-weight:normal;-webkit-text-stroke:0.35px #111;">Prachayaroch</div>
<div class="abs t" style="left:435.6px;top:821.3px;font-size:22px;line-height:44px;letter-spacing:-0.45px;color:#111;font-weight:normal;-webkit-text-stroke:0.35px #111;">32</div>
<div class="abs t" style="left:513.4px;top:821.3px;font-size:22px;line-height:44px;letter-spacing:-0.45px;color:#111;font-weight:normal;-webkit-text-stroke:0.35px #111;">Male</div>
<div class="abs t" style="left:154.0px;width:600px;text-align:right;top:821.3px;font-size:22px;line-height:44px;letter-spacing:-0.45px;color:#111;font-weight:normal;-webkit-text-stroke:0.35px #111;">43,602</div>
<div class="abs t" style="left:65.0px;top:850.0px;font-size:22px;line-height:44px;letter-spacing:-0.45px;color:#111;font-weight:normal;-webkit-text-stroke:0.35px #111;">&nbsp;&nbsp;Youprasert</div>
<div class="abs t" style="left:250.5px;top:850.0px;font-size:22px;line-height:44px;letter-spacing:-0.45px;color:#111;font-weight:normal;-webkit-text-stroke:0.35px #111;">Youprasert</div>
<div class="abs t" style="left:435.6px;top:850.0px;font-size:22px;line-height:44px;letter-spacing:-0.45px;color:#111;font-weight:normal;-webkit-text-stroke:0.35px #111;">44</div>
<div class="abs t" style="left:513.4px;top:850.0px;font-size:22px;line-height:44px;letter-spacing:-0.45px;color:#111;font-weight:normal;-webkit-text-stroke:0.35px #111;">Female</div>
<div class="abs t" style="left:154.0px;width:600px;text-align:right;top:850.0px;font-size:22px;line-height:44px;letter-spacing:-0.45px;color:#111;font-weight:normal;-webkit-text-stroke:0.35px #111;">118,292</div>
<div class="abs t" style="left:65.0px;top:878.7px;font-size:22px;line-height:44px;letter-spacing:-0.45px;color:#111;font-weight:normal;-webkit-text-stroke:0.35px #111;">Kongsri</div>
<div class="abs t" style="left:250.5px;top:878.7px;font-size:22px;line-height:44px;letter-spacing:-0.45px;color:#111;font-weight:normal;-webkit-text-stroke:0.35px #111;">Kongsri</div>
<div class="abs t" style="left:435.6px;top:878.7px;font-size:22px;line-height:44px;letter-spacing:-0.45px;color:#111;font-weight:normal;-webkit-text-stroke:0.35px #111;">33</div>
<div class="abs t" style="left:513.4px;top:878.7px;font-size:22px;line-height:44px;letter-spacing:-0.45px;color:#111;font-weight:normal;-webkit-text-stroke:0.35px #111;">Female</div>
<div class="abs t" style="left:154.0px;width:600px;text-align:right;top:878.7px;font-size:22px;line-height:44px;letter-spacing:-0.45px;color:#111;font-weight:normal;-webkit-text-stroke:0.35px #111;">73,698</div>
<div class="abs t" style="left:65.0px;top:907.5px;font-size:22px;line-height:44px;letter-spacing:-0.45px;color:#111;font-weight:normal;-webkit-text-stroke:0.35px #111;">&nbsp;Suraprachit</div>
<div class="abs t" style="left:250.5px;top:907.5px;font-size:22px;line-height:44px;letter-spacing:-0.45px;color:#111;font-weight:normal;-webkit-text-stroke:0.35px #111;">Suraprachit</div>
<div class="abs t" style="left:435.6px;top:907.5px;font-size:22px;line-height:44px;letter-spacing:-0.45px;color:#111;font-weight:normal;-webkit-text-stroke:0.35px #111;">35</div>
<div class="abs t" style="left:513.4px;top:907.5px;font-size:22px;line-height:44px;letter-spacing:-0.45px;color:#111;font-weight:normal;-webkit-text-stroke:0.35px #111;">Female</div>
<div class="abs t" style="left:154.0px;width:600px;text-align:right;top:907.5px;font-size:22px;line-height:44px;letter-spacing:-0.45px;color:#111;font-weight:normal;-webkit-text-stroke:0.35px #111;">47,416</div>
<div class="abs t" style="left:65.0px;top:936.2px;font-size:22px;line-height:44px;letter-spacing:-0.45px;color:#111;font-weight:normal;-webkit-text-stroke:0.35px #111;">Habpanom</div>
<div class="abs t" style="left:250.5px;top:936.2px;font-size:22px;line-height:44px;letter-spacing:-0.45px;color:#111;font-weight:normal;-webkit-text-stroke:0.35px #111;">Habpanom</div>
<div class="abs t" style="left:435.6px;top:936.2px;font-size:22px;line-height:44px;letter-spacing:-0.45px;color:#111;font-weight:normal;-webkit-text-stroke:0.35px #111;">22</div>
<div class="abs t" style="left:513.4px;top:936.2px;font-size:22px;line-height:44px;letter-spacing:-0.45px;color:#111;font-weight:normal;-webkit-text-stroke:0.35px #111;">Female</div>
<div class="abs t" style="left:154.0px;width:600px;text-align:right;top:936.2px;font-size:22px;line-height:44px;letter-spacing:-0.45px;color:#111;font-weight:normal;-webkit-text-stroke:0.35px #111;">139,453</div>
<div class="abs t" style="left:65.0px;top:964.9px;font-size:22px;line-height:44px;letter-spacing:-0.45px;color:#111;font-weight:normal;-webkit-text-stroke:0.35px #111;">&nbsp;&nbsp;&nbsp;Pikatsingkorn</div>
<div class="abs t" style="left:250.5px;top:964.9px;font-size:22px;line-height:44px;letter-spacing:-0.45px;color:#111;font-weight:normal;-webkit-text-stroke:0.35px #111;">Pikatsingkorn</div>
<div class="abs t" style="left:435.6px;top:964.9px;font-size:22px;line-height:44px;letter-spacing:-0.45px;color:#111;font-weight:normal;-webkit-text-stroke:0.35px #111;">53</div>
<div class="abs t" style="left:513.4px;top:964.9px;font-size:22px;line-height:44px;letter-spacing:-0.45px;color:#111;font-weight:normal;-webkit-text-stroke:0.35px #111;">Female</div>
<div class="abs t" style="left:154.0px;width:600px;text-align:right;top:964.9px;font-size:22px;line-height:44px;letter-spacing:-0.45px;color:#111;font-weight:normal;-webkit-text-stroke:0.35px #111;">136,751</div>
<div class="abs t" style="left:65.0px;top:993.6px;font-size:22px;line-height:44px;letter-spacing:-0.45px;color:#111;font-weight:normal;-webkit-text-stroke:0.35px #111;">Pitanuwat</div>
<div class="abs t" style="left:250.5px;top:993.6px;font-size:22px;line-height:44px;letter-spacing:-0.45px;color:#111;font-weight:normal;-webkit-text-stroke:0.35px #111;">Pitanuwat</div>
<div class="abs t" style="left:435.6px;top:993.6px;font-size:22px;line-height:44px;letter-spacing:-0.45px;color:#111;font-weight:normal;-webkit-text-stroke:0.35px #111;">33</div>
<div class="abs t" style="left:513.4px;top:993.6px;font-size:22px;line-height:44px;letter-spacing:-0.45px;color:#111;font-weight:normal;-webkit-text-stroke:0.35px #111;">Female</div>
<div class="abs t" style="left:154.0px;width:600px;text-align:right;top:993.6px;font-size:22px;line-height:44px;letter-spacing:-0.45px;color:#111;font-weight:normal;-webkit-text-stroke:0.35px #111;">68,815</div>
<div class="abs t" style="left:65.0px;top:1022.3px;font-size:22px;line-height:44px;letter-spacing:-0.45px;color:#111;font-weight:normal;-webkit-text-stroke:0.35px #111;">&nbsp;&nbsp;&nbsp;Sireelert</div>
<div class="abs t" style="left:250.5px;top:1022.3px;font-size:22px;line-height:44px;letter-spacing:-0.45px;color:#111;font-weight:normal;-webkit-text-stroke:0.35px #111;">Sireelert</div>
<div class="abs t" style="left:435.6px;top:1022.3px;font-size:22px;line-height:44px;letter-spacing:-0.45px;color:#111;font-weight:normal;-webkit-text-stroke:0.35px #111;">20</div>
<div class="abs t" style="left:513.4px;top:1022.3px;font-size:22px;line-height:44px;letter-spacing:-0.45px;color:#111;font-weight:normal;-webkit-text-stroke:0.35px #111;">Female</div>
<div class="abs t" style="left:154.0px;width:600px;text-align:right;top:1022.3px;font-size:22px;line-height:44px;letter-spacing:-0.45px;color:#111;font-weight:normal;-webkit-text-stroke:0.35px #111;">133,852</div>
<div class="abs t" style="left:65.0px;top:1051.1px;font-size:22px;line-height:44px;letter-spacing:-0.45px;color:#111;font-weight:normal;-webkit-text-stroke:0.35px #111;">&nbsp;Pikatsingkorn</div>
<div class="abs t" style="left:250.5px;top:1051.1px;font-size:22px;line-height:44px;letter-spacing:-0.45px;color:#111;font-weight:normal;-webkit-text-stroke:0.35px #111;">Pikatsingkorn</div>
<div class="abs t" style="left:435.6px;top:1051.1px;font-size:22px;line-height:44px;letter-spacing:-0.45px;color:#111;font-weight:normal;-webkit-text-stroke:0.35px #111;">65</div>
<div class="abs t" style="left:513.4px;top:1051.1px;font-size:22px;line-height:44px;letter-spacing:-0.45px;color:#111;font-weight:normal;-webkit-text-stroke:0.35px #111;">Female</div>
<div class="abs t" style="left:154.0px;width:600px;text-align:right;top:1051.1px;font-size:22px;line-height:44px;letter-spacing:-0.45px;color:#111;font-weight:normal;-webkit-text-stroke:0.35px #111;">30,974</div>
<div class="abs t" style="left:65.0px;top:1079.8px;font-size:22px;line-height:44px;letter-spacing:-0.45px;color:#111;font-weight:normal;-webkit-text-stroke:0.35px #111;">Intaum</div>
<div class="abs t" style="left:250.5px;top:1079.8px;font-size:22px;line-height:44px;letter-spacing:-0.45px;color:#111;font-weight:normal;-webkit-text-stroke:0.35px #111;">Intaum</div>
<div class="abs t" style="left:435.6px;top:1079.8px;font-size:22px;line-height:44px;letter-spacing:-0.45px;color:#111;font-weight:normal;-webkit-text-stroke:0.35px #111;">21</div>
<div class="abs t" style="left:513.4px;top:1079.8px;font-size:22px;line-height:44px;letter-spacing:-0.45px;color:#111;font-weight:normal;-webkit-text-stroke:0.35px #111;">Female</div>
<div class="abs t" style="left:154.0px;width:600px;text-align:right;top:1079.8px;font-size:22px;line-height:44px;letter-spacing:-0.45px;color:#111;font-weight:normal;-webkit-text-stroke:0.35px #111;">95,446</div>
<div class="abs t" style="left:65.0px;top:1108.5px;font-size:22px;line-height:44px;letter-spacing:-0.45px;color:#111;font-weight:normal;-webkit-text-stroke:0.35px #111;">Methavorakul</div>
<div class="abs t" style="left:250.5px;top:1108.5px;font-size:22px;line-height:44px;letter-spacing:-0.45px;color:#111;font-weight:normal;-webkit-text-stroke:0.35px #111;">Methavorakul</div>
<div class="abs t" style="left:435.6px;top:1108.5px;font-size:22px;line-height:44px;letter-spacing:-0.45px;color:#111;font-weight:normal;-webkit-text-stroke:0.35px #111;">49</div>
<div class="abs t" style="left:513.4px;top:1108.5px;font-size:22px;line-height:44px;letter-spacing:-0.45px;color:#111;font-weight:normal;-webkit-text-stroke:0.35px #111;">Male</div>
<div class="abs t" style="left:154.0px;width:600px;text-align:right;top:1108.5px;font-size:22px;line-height:44px;letter-spacing:-0.45px;color:#111;font-weight:normal;-webkit-text-stroke:0.35px #111;">122,390</div>
<div class="abs t" style="left:65.0px;top:1137.2px;font-size:22px;line-height:44px;letter-spacing:-0.45px;color:#111;font-weight:normal;-webkit-text-stroke:0.35px #111;">Methavorakul</div>
<div class="abs t" style="left:250.5px;top:1137.2px;font-size:22px;line-height:44px;letter-spacing:-0.45px;color:#111;font-weight:normal;-webkit-text-stroke:0.35px #111;">Methavorakul</div>
<div class="abs t" style="left:435.6px;top:1137.2px;font-size:22px;line-height:44px;letter-spacing:-0.45px;color:#111;font-weight:normal;-webkit-text-stroke:0.35px #111;">20</div>
<div class="abs t" style="left:513.4px;top:1137.2px;font-size:22px;line-height:44px;letter-spacing:-0.45px;color:#111;font-weight:normal;-webkit-text-stroke:0.35px #111;">Male</div>
<div class="abs t" style="left:154.0px;width:600px;text-align:right;top:1137.2px;font-size:22px;line-height:44px;letter-spacing:-0.45px;color:#111;font-weight:normal;-webkit-text-stroke:0.35px #111;">147,857</div>
<div class="abs t" style="left:65.0px;top:1165.9px;font-size:22px;line-height:44px;letter-spacing:-0.45px;color:#111;font-weight:normal;-webkit-text-stroke:0.35px #111;">Sireelert</div>
<div class="abs t" style="left:250.5px;top:1165.9px;font-size:22px;line-height:44px;letter-spacing:-0.45px;color:#111;font-weight:normal;-webkit-text-stroke:0.35px #111;">Sireelert</div>
<div class="abs t" style="left:435.6px;top:1165.9px;font-size:22px;line-height:44px;letter-spacing:-0.45px;color:#111;font-weight:normal;-webkit-text-stroke:0.35px #111;">61</div>
<div class="abs t" style="left:513.4px;top:1165.9px;font-size:22px;line-height:44px;letter-spacing:-0.45px;color:#111;font-weight:normal;-webkit-text-stroke:0.35px #111;">Female</div>
<div class="abs t" style="left:154.0px;width:600px;text-align:right;top:1165.9px;font-size:22px;line-height:44px;letter-spacing:-0.45px;color:#111;font-weight:normal;-webkit-text-stroke:0.35px #111;">57,041</div>
<div class="abs t" style="left:65.0px;top:1194.7px;font-size:22px;line-height:44px;letter-spacing:-0.45px;color:#111;font-weight:normal;-webkit-text-stroke:0.35px #111;">&nbsp;Pianduangsri</div>
<div class="abs t" style="left:250.5px;top:1194.7px;font-size:22px;line-height:44px;letter-spacing:-0.45px;color:#111;font-weight:normal;-webkit-text-stroke:0.35px #111;">Pianduangsri</div>
<div class="abs t" style="left:435.6px;top:1194.7px;font-size:22px;line-height:44px;letter-spacing:-0.45px;color:#111;font-weight:normal;-webkit-text-stroke:0.35px #111;">40</div>
<div class="abs t" style="left:513.4px;top:1194.7px;font-size:22px;line-height:44px;letter-spacing:-0.45px;color:#111;font-weight:normal;-webkit-text-stroke:0.35px #111;">Female</div>
<div class="abs t" style="left:154.0px;width:600px;text-align:right;top:1194.7px;font-size:22px;line-height:44px;letter-spacing:-0.45px;color:#111;font-weight:normal;-webkit-text-stroke:0.35px #111;">118,523</div>
<div class="abs t" style="left:65.0px;top:1223.4px;font-size:22px;line-height:44px;letter-spacing:-0.45px;color:#111;font-weight:normal;-webkit-text-stroke:0.35px #111;">Pothanun</div>
<div class="abs t" style="left:250.5px;top:1223.4px;font-size:22px;line-height:44px;letter-spacing:-0.45px;color:#111;font-weight:normal;-webkit-text-stroke:0.35px #111;">Pothanun</div>
<div class="abs t" style="left:435.6px;top:1223.4px;font-size:22px;line-height:44px;letter-spacing:-0.45px;color:#111;font-weight:normal;-webkit-text-stroke:0.35px #111;">36</div>
<div class="abs t" style="left:513.4px;top:1223.4px;font-size:22px;line-height:44px;letter-spacing:-0.45px;color:#111;font-weight:normal;-webkit-text-stroke:0.35px #111;">Male</div>
<div class="abs t" style="left:154.0px;width:600px;text-align:right;top:1223.4px;font-size:22px;line-height:44px;letter-spacing:-0.45px;color:#111;font-weight:normal;-webkit-text-stroke:0.35px #111;">75,799</div>
<div class="abs t" style="left:65.0px;top:1252.1px;font-size:22px;line-height:44px;letter-spacing:-0.45px;color:#111;font-weight:normal;-webkit-text-stroke:0.35px #111;">Prayoonhong</div>
<div class="abs t" style="left:250.5px;top:1252.1px;font-size:22px;line-height:44px;letter-spacing:-0.45px;color:#111;font-weight:normal;-webkit-text-stroke:0.35px #111;">Prayoonhong</div>
<div class="abs t" style="left:435.6px;top:1252.1px;font-size:22px;line-height:44px;letter-spacing:-0.45px;color:#111;font-weight:normal;-webkit-text-stroke:0.35px #111;">64</div>
<div class="abs t" style="left:513.4px;top:1252.1px;font-size:22px;line-height:44px;letter-spacing:-0.45px;color:#111;font-weight:normal;-webkit-text-stroke:0.35px #111;">Female</div>
<div class="abs t" style="left:154.0px;width:600px;text-align:right;top:1252.1px;font-size:22px;line-height:44px;letter-spacing:-0.45px;color:#111;font-weight:normal;-webkit-text-stroke:0.35px #111;">41,801</div>
<div class="abs t" style="left:65.0px;top:1280.8px;font-size:22px;line-height:44px;letter-spacing:-0.45px;color:#111;font-weight:normal;-webkit-text-stroke:0.35px #111;">&nbsp;&nbsp;Kongsri</div>
<div class="abs t" style="left:250.5px;top:1280.8px;font-size:22px;line-height:44px;letter-spacing:-0.45px;color:#111;font-weight:normal;-webkit-text-stroke:0.35px #111;">Kongsri</div>
<div class="abs t" style="left:435.6px;top:1280.8px;font-size:22px;line-height:44px;letter-spacing:-0.45px;color:#111;font-weight:normal;-webkit-text-stroke:0.35px #111;">19</div>
<div class="abs t" style="left:513.4px;top:1280.8px;font-size:22px;line-height:44px;letter-spacing:-0.45px;color:#111;font-weight:normal;-webkit-text-stroke:0.35px #111;">Male</div>
<div class="abs t" style="left:154.0px;width:600px;text-align:right;top:1280.8px;font-size:22px;line-height:44px;letter-spacing:-0.45px;color:#111;font-weight:normal;-webkit-text-stroke:0.35px #111;">100,525</div>
<div class="abs t" style="left:65.0px;top:1309.5px;font-size:22px;line-height:44px;letter-spacing:-0.45px;color:#111;font-weight:normal;-webkit-text-stroke:0.35px #111;">Bunlerngsri</div>
<div class="abs t" style="left:250.5px;top:1309.5px;font-size:22px;line-height:44px;letter-spacing:-0.45px;color:#111;font-weight:normal;-webkit-text-stroke:0.35px #111;">Bunlerngsri</div>
<div class="abs t" style="left:435.6px;top:1309.5px;font-size:22px;line-height:44px;letter-spacing:-0.45px;color:#111;font-weight:normal;-webkit-text-stroke:0.35px #111;">49</div>
<div class="abs t" style="left:513.4px;top:1309.5px;font-size:22px;line-height:44px;letter-spacing:-0.45px;color:#111;font-weight:normal;-webkit-text-stroke:0.35px #111;">Female</div>
<div class="abs t" style="left:154.0px;width:600px;text-align:right;top:1309.5px;font-size:22px;line-height:44px;letter-spacing:-0.45px;color:#111;font-weight:normal;-webkit-text-stroke:0.35px #111;">128,692</div>
<div class="abs t" style="left:65.0px;top:1338.3px;font-size:22px;line-height:44px;letter-spacing:-0.45px;color:#111;font-weight:normal;-webkit-text-stroke:0.35px #111;">&nbsp;Suraprasert</div>
<div class="abs t" style="left:250.5px;top:1338.3px;font-size:22px;line-height:44px;letter-spacing:-0.45px;color:#111;font-weight:normal;-webkit-text-stroke:0.35px #111;">Suraprasert</div>
<div class="abs t" style="left:435.6px;top:1338.3px;font-size:22px;line-height:44px;letter-spacing:-0.45px;color:#111;font-weight:normal;-webkit-text-stroke:0.35px #111;">28</div>
<div class="abs t" style="left:513.4px;top:1338.3px;font-size:22px;line-height:44px;letter-spacing:-0.45px;color:#111;font-weight:normal;-webkit-text-stroke:0.35px #111;">Male</div>
<div class="abs t" style="left:154.0px;width:600px;text-align:right;top:1338.3px;font-size:22px;line-height:44px;letter-spacing:-0.45px;color:#111;font-weight:normal;-webkit-text-stroke:0.35px #111;">72,870</div>
<div class="abs t" style="left:65.0px;top:1367.0px;font-size:22px;line-height:44px;letter-spacing:-0.45px;color:#111;font-weight:normal;-webkit-text-stroke:0.35px #111;">&nbsp;Titipatrayunyong</div>
<div class="abs t" style="left:250.5px;top:1367.0px;font-size:22px;line-height:44px;letter-spacing:-0.45px;color:#111;font-weight:normal;-webkit-text-stroke:0.35px #111;">Titipatrayunyong</div>
<div class="abs t" style="left:435.6px;top:1367.0px;font-size:22px;line-height:44px;letter-spacing:-0.45px;color:#111;font-weight:normal;-webkit-text-stroke:0.35px #111;">33</div>
<div class="abs t" style="left:513.4px;top:1367.0px;font-size:22px;line-height:44px;letter-spacing:-0.45px;color:#111;font-weight:normal;-webkit-text-stroke:0.35px #111;">Female</div>
<div class="abs t" style="left:154.0px;width:600px;text-align:right;top:1367.0px;font-size:22px;line-height:44px;letter-spacing:-0.45px;color:#111;font-weight:normal;-webkit-text-stroke:0.35px #111;">84,995</div>
<div class="abs t" style="left:65.0px;top:1395.7px;font-size:22px;line-height:44px;letter-spacing:-0.45px;color:#111;font-weight:normal;-webkit-text-stroke:0.35px #111;">Chomsri</div>
<div class="abs t" style="left:250.5px;top:1395.7px;font-size:22px;line-height:44px;letter-spacing:-0.45px;color:#111;font-weight:normal;-webkit-text-stroke:0.35px #111;">Chomsri</div>
<div class="abs t" style="left:435.6px;top:1395.7px;font-size:22px;line-height:44px;letter-spacing:-0.45px;color:#111;font-weight:normal;-webkit-text-stroke:0.35px #111;">39</div>
<div class="abs t" style="left:513.4px;top:1395.7px;font-size:22px;line-height:44px;letter-spacing:-0.45px;color:#111;font-weight:normal;-webkit-text-stroke:0.35px #111;">Female</div>
<div class="abs t" style="left:154.0px;width:600px;text-align:right;top:1395.7px;font-size:22px;line-height:44px;letter-spacing:-0.45px;color:#111;font-weight:normal;-webkit-text-stroke:0.35px #111;">110,094</div>
<div class="abs t" style="left:65.0px;top:1424.4px;font-size:22px;line-height:44px;letter-spacing:-0.45px;color:#111;font-weight:normal;-webkit-text-stroke:0.35px #111;">Youprasert</div>
<div class="abs t" style="left:250.5px;top:1424.4px;font-size:22px;line-height:44px;letter-spacing:-0.45px;color:#111;font-weight:normal;-webkit-text-stroke:0.35px #111;">Youprasert</div>
<div class="abs t" style="left:435.6px;top:1424.4px;font-size:22px;line-height:44px;letter-spacing:-0.45px;color:#111;font-weight:normal;-webkit-text-stroke:0.35px #111;">35</div>
<div class="abs t" style="left:513.4px;top:1424.4px;font-size:22px;line-height:44px;letter-spacing:-0.45px;color:#111;font-weight:normal;-webkit-text-stroke:0.35px #111;">Male</div>
<div class="abs t" style="left:154.0px;width:600px;text-align:right;top:1424.4px;font-size:22px;line-height:44px;letter-spacing:-0.45px;color:#111;font-weight:normal;-webkit-text-stroke:0.35px #111;">143,126</div>
<div class="abs t" style="left:911.9px;top:765.2px;font-size:21px;line-height:42px;color:#111;font-weight:bold;font-style:normal;transform:scaleX(1.0074);transform-origin:0 0;">sum</div>
<div class="abs t" style="left:928.5px;top:794.2px;font-size:21px;line-height:42px;color:#222;font-weight:normal;font-style:normal;transform:scaleX(0.9323);transform-origin:0 0;">9,384,624</div>
<div class="abs t" style="left:1150.4px;top:765.2px;font-size:21px;line-height:42px;color:#222;font-weight:normal;font-style:normal;transform:scaleX(1.0025);transform-origin:0 0;">sumif</div>
<div class="abs t" style="left:1186.8px;top:794.2px;font-size:21px;line-height:42px;color:#222;font-weight:normal;font-style:normal;transform:scaleX(0.9419);transform-origin:0 0;">5,670,046</div>
<div class="abs t" style="left:1408.7px;top:765.2px;font-size:21px;line-height:42px;color:#222;font-weight:normal;font-style:normal;transform:scaleX(0.9675);transform-origin:0 0;">sumifs</div>
<div class="abs t" style="left:1443.7px;top:794.2px;font-size:21px;line-height:42px;color:#222;font-weight:normal;font-style:normal;transform:scaleX(0.9247);transform-origin:0 0;">2930354</div>
<div class="abs" style="left:1522.6px;top:770.3px;width:125.8px;height:30.5px;background:transparent;border:2.3px solid #217346;box-sizing:border-box;"></div>
<div class="abs" style="left:1643.5px;top:796.5px;width:6.0px;height:6.0px;background:#217346;border:1px solid #edebed;"></div>
<svg class="abs" style="left:1532.0px;top:815.0px" width="20" height="22" viewBox="0 0 20 22"><path d="M7 2 H12 V7 H17 V12 H12 V17 H7 V12 H2 V7 H7 Z" fill="#fff" stroke="#111" stroke-width="1.6"/></svg>
<div class="abs" style="left:2112.0px;top:741.5px;width:28.0px;height:710.0px;background:#e5e4e5;"></div>
<div class="abs" style="left:2112.0px;top:741.5px;width:1.5px;height:710.0px;background:#dad9da;"></div>
<svg class="abs" style="left:2118.0px;top:748.0px" width="16" height="14" viewBox="0 0 16 14"><path d="M2 12 L8 3 L14 12 Z" fill="#555"/></svg>
<div class="abs" style="left:2119.5px;top:766.0px;width:13.0px;height:24.0px;background:#666;border-radius:7px;"></div>
<div class="abs" style="left:20.0px;top:417.0px;width:72.0px;height:72.0px;background:#6e706e;border-radius:36px;"></div>
<svg class="abs" style="left:38.0px;top:435.0px" width="36" height="36" viewBox="0 0 36 36"><path d="M14 4.5 H8 A4 4 0 0 0 4 8.5 V27 A4 4 0 0 0 8 31 H26 A4 4 0 0 0 30 27 V21" stroke="#fff" stroke-width="2.6" fill="none"/><path d="M18 17 L30 5 M21 4.5 H30.5 V14" stroke="#fff" stroke-width="2.6" fill="none"/></svg>
<div class="abs" style="left:2048.0px;top:968.0px;width:72.0px;height:72.0px;background:#a2a2a2;border-radius:36px;"></div>
<svg class="abs" style="left:2064.0px;top:985.0px" width="42" height="42" viewBox="0 0 42 42"><path d="M26.5 3.7 A16.3 16.3 0 1 0 23.7 35" stroke="#fff" stroke-width="2.2" fill="none" stroke-linecap="round"/><path d="M33.3 11.2 A10.3 10.3 0 0 1 17 24.8" stroke="#fff" stroke-width="2.2" fill="none" stroke-linecap="round"/><path d="M14.9 22.7 L30.6 7" stroke="#fff" stroke-width="3.2" stroke-linecap="round"/><path d="M13.5 24.5 L16 21" stroke="#fff" stroke-width="1.5"/><circle cx="33.6" cy="4.2" r="1.9" fill="#fff"/></svg>
<div class="abs" style="left:0.0px;top:1444.0px;width:2160.0px;height:176.0px;background:linear-gradient(180deg,#a0a0a0 0%,#959595 35%,#7a7a7a 60%,#5a5a5a 80%,#454545 100%);"></div>
<div class="abs" style="left:0.0px;top:1444.0px;width:2160.0px;height:176.0px;background:linear-gradient(90deg,rgba(0,0,0,0.12) 0%,rgba(0,0,0,0) 3%,rgba(0,0,0,0) 95%,rgba(0,0,0,0.22) 100%);"></div>
<div class="abs" style="left:21.0px;top:1481.3px;width:202.0px;height:76.5px;background:#080808;border-radius:39px;border:2.2px solid #636363;box-sizing:border-box;"></div>
<div class="abs" style="left:42.9px;top:1498.6px;width:41.2px;height:41.2px;background:#f25a6e;border-radius:21px;"></div>
<div class="abs" style="left:56.7px;top:1512.4px;width:13.6px;height:13.6px;background:transparent;border:2.2px solid #1e1e1e;border-radius:7px;box-sizing:border-box;"></div>
<svg class="abs" style="left:100.0px;top:1499.5px" width="46" height="42" viewBox="0 0 46 42"><rect x="3" y="6.3" width="32.2" height="30.7" rx="5" fill="#3593e8"/><path d="M9.5 13.4 H15.5 M9.5 20.2 H24.5 M9.5 27.3 H19" stroke="#0a0a0a" stroke-width="2.8" stroke-linecap="round"/><path d="M31 0 Q33.6 7.6 41.5 10.5 Q33.6 13.4 31 21 Q28.4 13.4 20.5 10.5 Q28.4 7.6 31 0 Z" fill="#3593e8" stroke="#080808" stroke-width="3" stroke-linejoin="round"/><path d="M31 1.5 Q33.4 8 40 10.5 Q33.4 13 31 19.5 Q28.6 13 22 10.5 Q28.6 8 31 1.5 Z" fill="#3593e8"/></svg>
<div class="abs" style="left:158.8px;top:1498.9px;width:41.2px;height:41.2px;background:#3593e8;border-radius:21px;"></div>
<svg class="abs" style="left:166.0px;top:1505.0px" width="26" height="30" viewBox="0 0 26 30"><path d="M13.4 1.6 L24.6 6 V13 C24.6 19.5 19.8 24.5 13.4 27.4 C7 24.5 2.2 19.5 2.2 13 V6 Z" fill="#3593e8" stroke="#1a1a1a" stroke-width="1.8" stroke-linejoin="round"/><path d="M13.4 5 L21.6 8.2 V13.2 C21.6 18 18 21.8 13.4 24 C8.8 21.8 5.2 18 5.2 13.2 V8.2 Z" fill="#1e1e1e"/></svg>
<div class="abs" style="left:336.0px;top:1473.0px;width:260.0px;height:93.0px;background:#0d0d0d;border-radius:47px;border:2.2px solid #636363;box-sizing:border-box;"></div>
<svg class="abs" style="left:370.0px;top:1494.0px" width="50" height="50" viewBox="0 0 50 50"><rect x="16.5" y="5" width="16.3" height="34" rx="8.15" stroke="#f0566a" stroke-width="2.8" fill="none"/><path d="M24.5 39 V42 C24.5 44 22 44.5 20 45.5" stroke="#f0566a" stroke-width="2.8" fill="none"/><path d="M11.5 45.7 H38" stroke="#f0566a" stroke-width="2.8" stroke-linecap="round"/><path d="M5.5 7 L44 44.5" stroke="#0d0d0d" stroke-width="7"/><path d="M5.5 7 L44 44.5" stroke="#f0566a" stroke-width="2.8" stroke-linecap="round"/></svg>
<div class="abs t" style="left:436.5px;top:1484.5px;font-size:35px;line-height:70px;color:#fff;font-weight:bold;font-style:normal;transform:scaleX(0.9480);transform-origin:0 0;">Unmute</div>
<div class="abs" style="left:611.0px;top:1473.0px;width:312.4px;height:93.0px;background:#0d0d0d;border-radius:47px;border:2.2px solid #636363;box-sizing:border-box;"></div>
<svg class="abs" style="left:645.0px;top:1494.0px" width="50" height="50" viewBox="0 0 50 50"><rect x="5.6" y="10" width="29" height="31.7" rx="5.5" stroke="#f0566a" stroke-width="2.8" fill="none"/><path d="M34.6 19 L45 14.5 V34.5 L34.6 30" stroke="#f0566a" stroke-width="2.8" fill="none" stroke-linejoin="round"/><path d="M6.4 7.4 L44.2 45.2" stroke="#0d0d0d" stroke-width="7"/><path d="M6.4 7.4 L44.2 45.2" stroke="#f0566a" stroke-width="2.8" stroke-linecap="round"/></svg>
<div class="abs t" style="left:710.6px;top:1484.5px;font-size:35px;line-height:70px;color:#fff;font-weight:bold;font-style:normal;transform:scaleX(0.9580);transform-origin:0 0;">Start Video</div>
<div class="abs" style="left:938.0px;top:1473.0px;width:225.6px;height:93.0px;background:#0d0d0d;border-radius:47px;border:2.2px solid #636363;box-sizing:border-box;"></div>
<svg class="abs" style="left:970.0px;top:1500.0px" width="50" height="40" viewBox="0 0 50 40"><rect x="4" y="3" width="42" height="33" rx="5" stroke="#fff" stroke-width="3" fill="none"/><path d="M25 29 V11 M18 18 L25 11 L32 18" stroke="#fff" stroke-width="3" fill="none"/></svg>
<div class="abs t" style="left:1037.0px;top:1484.5px;font-size:35px;line-height:70px;color:#fff;font-weight:bold;font-style:normal;transform:scaleX(0.9293);transform-origin:0 0;">Share</div>
<div class="abs" style="left:1176.7px;top:1471.6px;width:96.0px;height:96.0px;background:#f7f7f7;border-radius:48px;"></div>
<svg class="abs" style="left:1200.0px;top:1497.0px" width="50" height="46" viewBox="0 0 50 46"><path d="M7 15.5 H15 L27.5 4.5 V41.5 L15 30.5 H7 A2.5 2.5 0 0 1 4.5 28 V18 A2.5 2.5 0 0 1 7 15.5 Z" fill="#f7f7f7" stroke="#111" stroke-width="3" stroke-linejoin="round"/><path d="M11 23 L22 15 V31 Z" fill="#258a68"/><path d="M34 16.5 A10 10 0 0 1 34 31.5 M40 10.5 A17 17 0 0 1 40 37.5" stroke="#111" stroke-width="3" fill="none" stroke-linecap="round"/></svg>
<div class="abs" style="left:1286.0px;top:1473.0px;width:322.7px;height:93.0px;background:#0d0d0d;border-radius:47px;border:2.2px solid #636363;box-sizing:border-box;"></div>
<svg class="abs" style="left:1323.0px;top:1497.0px" width="50" height="46" viewBox="0 0 50 46"><defs><linearGradient id="aig" x1="0" y1="0" x2="1" y2="1"><stop offset="0" stop-color="#0a70d8"/><stop offset="1" stop-color="#1aa0f8"/></linearGradient><linearGradient id="aig2" x1="0" y1="0" x2="1" y2="1"><stop offset="0" stop-color="#30c8f0"/><stop offset="0.45" stop-color="#1a78d8"/><stop offset="0.7" stop-color="#3ad0e8"/><stop offset="1" stop-color="#80c040"/></linearGradient></defs><circle cx="19.5" cy="24" r="15" stroke="url(#aig)" stroke-width="8.5" fill="none"/><circle cx="33" cy="14.5" r="11" fill="url(#aig2)" opacity="0.95"/></svg>
<div class="abs t" style="left:1386.0px;top:1484.5px;font-size:35px;line-height:70px;color:#fff;font-weight:bold;font-style:normal;transform:scaleX(0.9304);transform-origin:0 0;">AI Assistant</div>
<div class="abs" style="left:1622.7px;top:1472.6px;width:94.0px;height:94.0px;background:#0d0d0d;border-radius:47px;border:2.2px solid #636363;box-sizing:border-box;"></div>
<svg class="abs" style="left:1646.0px;top:1497.0px" width="50" height="46" viewBox="0 0 50 46"><path d="M36 13 A18 18 0 1 1 30 8" stroke="#fff" stroke-width="3" fill="none"/><circle cx="16" cy="21" r="2.3" fill="#fff"/><circle cx="28" cy="21" r="2.3" fill="#fff"/><path d="M13 29 Q22 37 31 29" stroke="#fff" stroke-width="3" fill="none" stroke-linecap="round"/><path d="M40 3 V15 M34 9 H46" stroke="#fff" stroke-width="2.6"/></svg>
<div class="abs" style="left:1731.0px;top:1472.6px;width:94.0px;height:94.0px;background:#0d0d0d;border-radius:47px;border:2.2px solid #636363;box-sizing:border-box;"></div>
<div class="abs" style="left:1759.5px;top:1515.5px;width:8.0px;height:8.0px;background:#fff;border-radius:4px;"></div>
<div class="abs" style="left:1774.1px;top:1515.5px;width:8.0px;height:8.0px;background:#fff;border-radius:4px;"></div>
<div class="abs" style="left:1788.7px;top:1515.5px;width:8.0px;height:8.0px;background:#fff;border-radius:4px;"></div>
<div class="abs" style="left:2044.0px;top:1472.0px;width:96.0px;height:96.0px;background:#dc1f30;border-radius:48px;"></div>
<svg class="abs" style="left:2074.0px;top:1502.0px" width="36" height="36" viewBox="0 0 36 36"><path d="M2 2 L34 34 M34 2 L2 34" stroke="#fff" stroke-width="2.8" stroke-linecap="round"/></svg>
</body></html>
